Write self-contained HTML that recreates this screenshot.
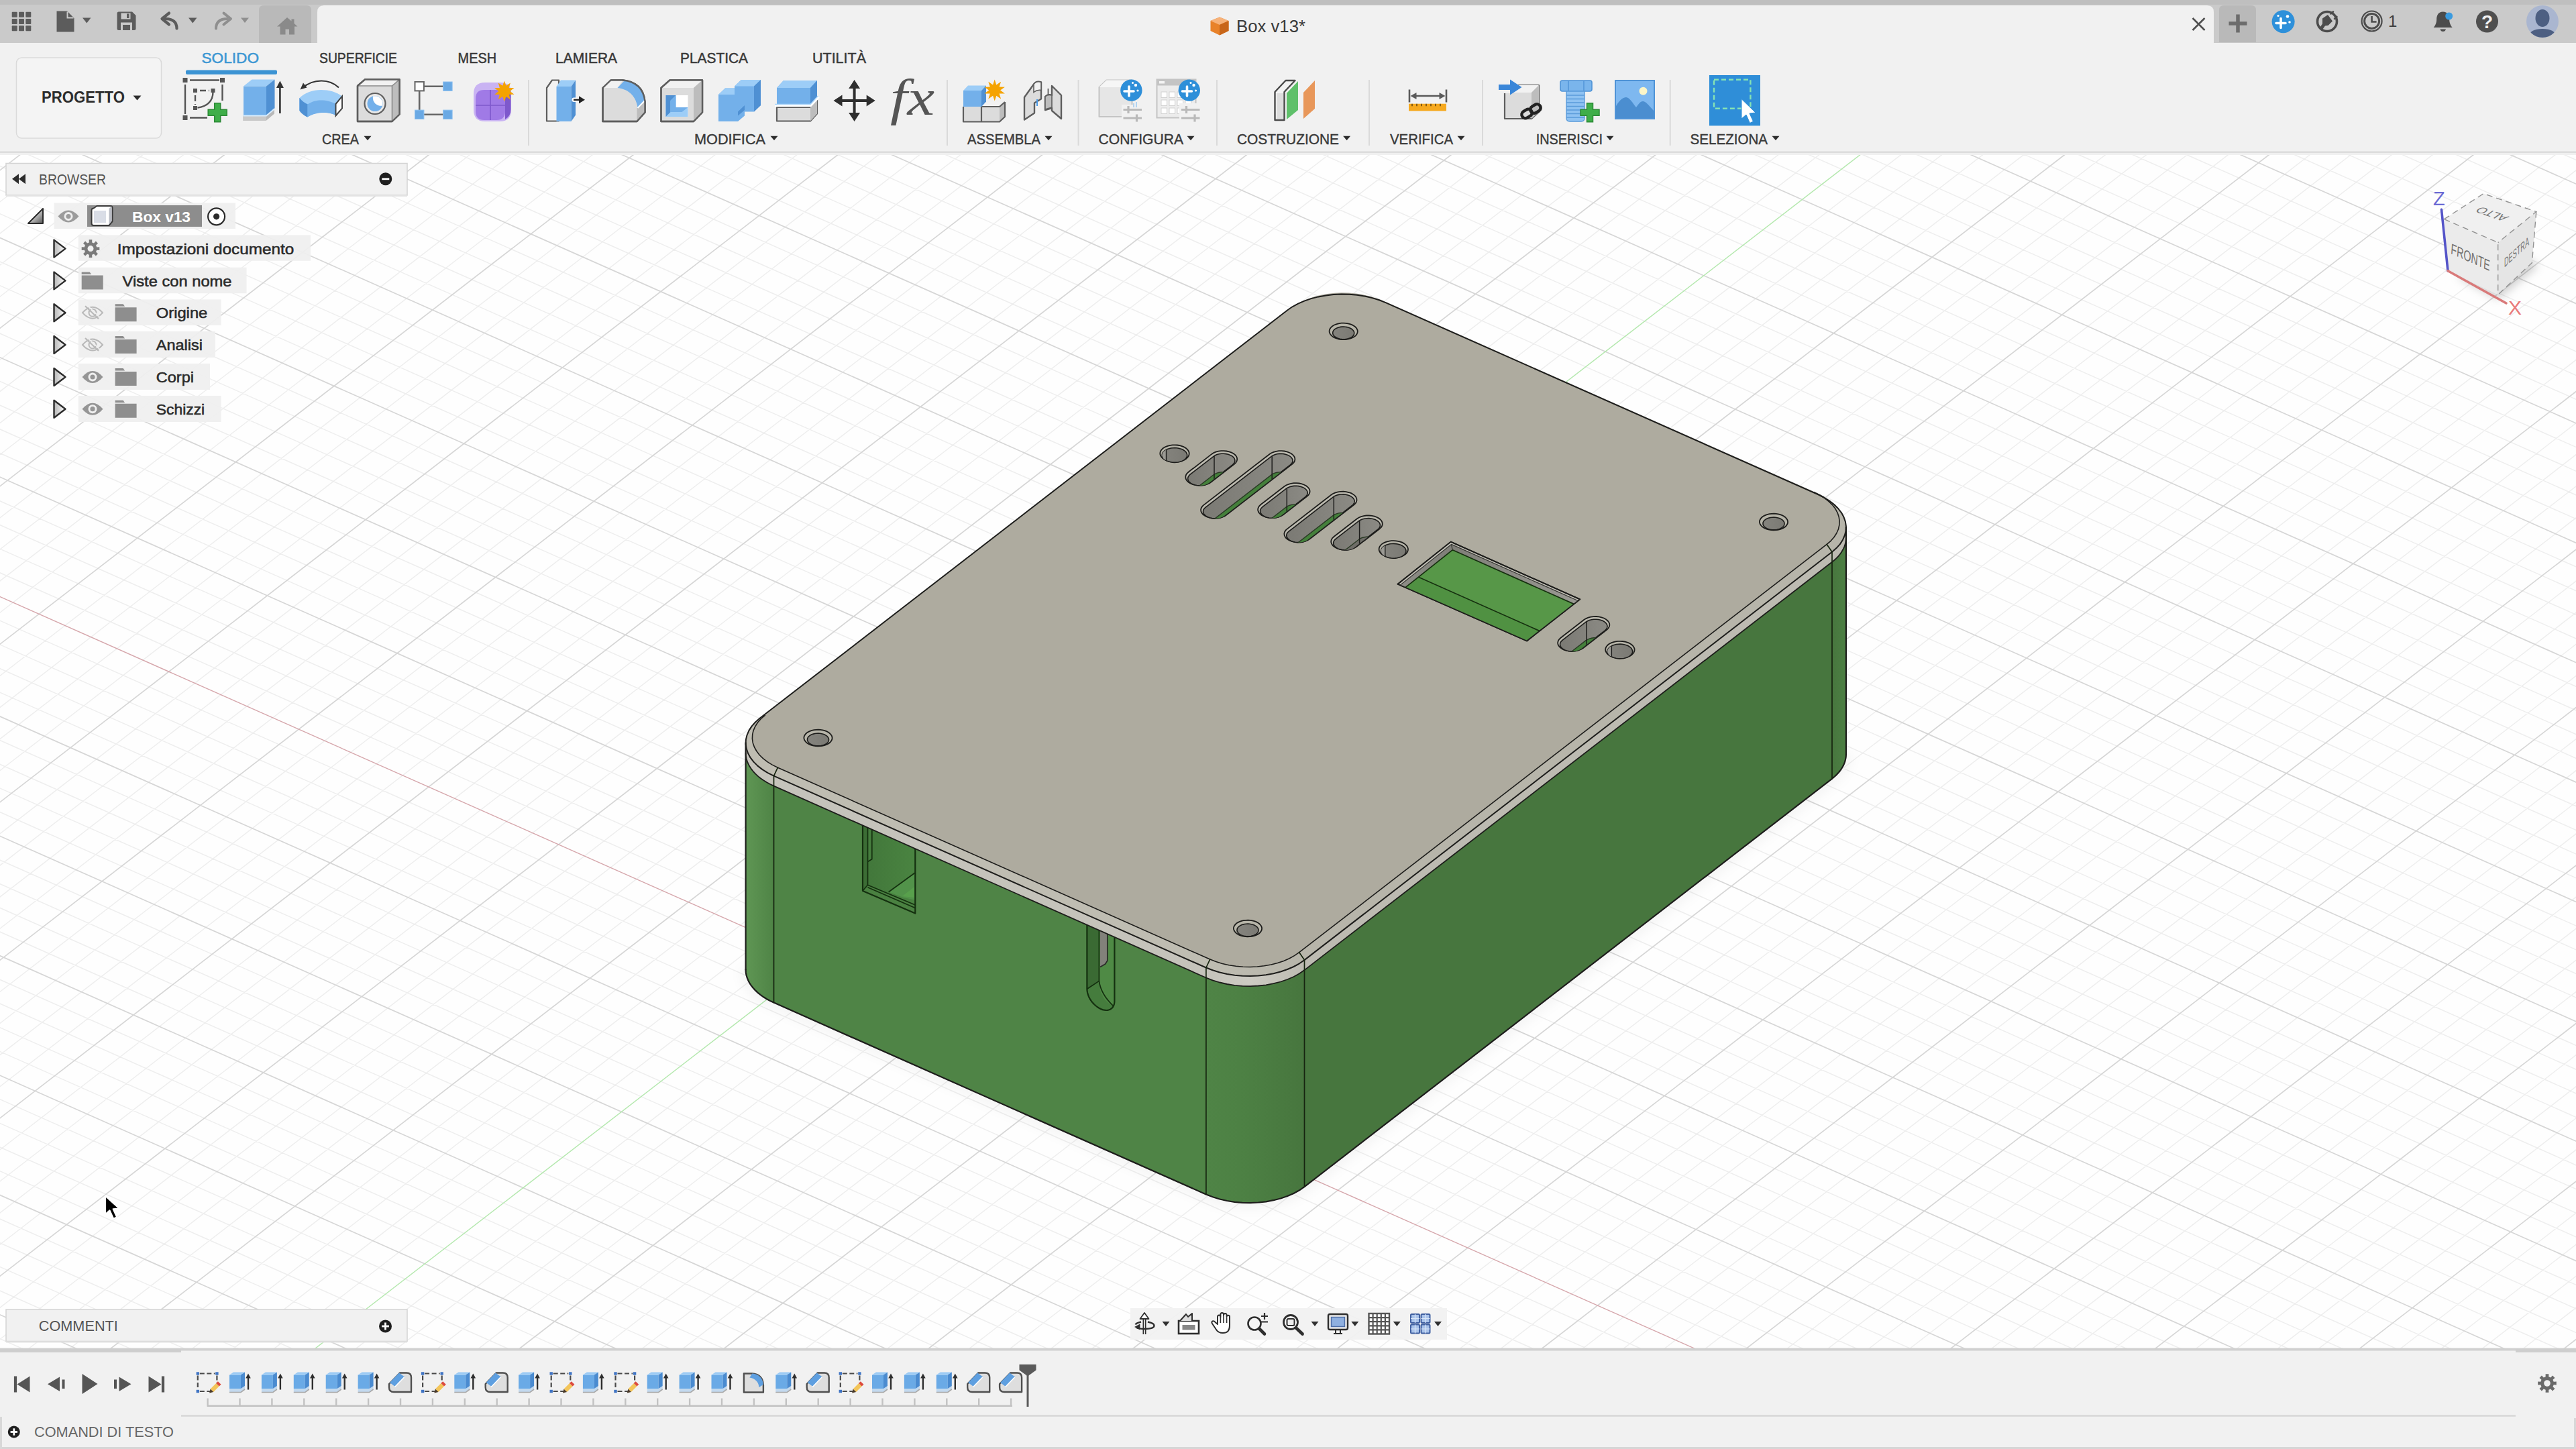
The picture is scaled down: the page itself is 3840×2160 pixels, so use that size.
<!DOCTYPE html>
<html><head><meta charset="utf-8"><title>Box v13</title>
<style>html,body{margin:0;padding:0;background:#fff;}body{width:3840px;height:2160px;overflow:hidden;font-family:"Liberation Sans", sans-serif;}svg{display:block;}text{font-family:"Liberation Sans", sans-serif;}</style>
</head><body>
<svg width="3840" height="2160" viewBox="0 0 3840 2160">
<rect width="3840" height="2160" fill="#fefefe"/>
<g id="grid">
<path d="M-20.0 2022.3L3860.0 3743.5M-20.0 1986.7L3860.0 3707.8M-20.0 1915.3L3860.0 3636.5M-20.0 1879.6L3860.0 3600.8M-20.0 1844.0L3860.0 3565.1M-20.0 1808.3L3860.0 3529.5M-20.0 1736.9L3860.0 3458.1M-20.0 1701.3L3860.0 3422.4M-20.0 1665.6L3860.0 3386.8M-20.0 1629.9L3860.0 3351.1M-20.0 1558.6L3860.0 3279.7M-20.0 1522.9L3860.0 3244.1M-20.0 1487.2L3860.0 3208.4M-20.0 1451.5L3860.0 3172.7M-20.0 1380.2L3860.0 3101.4M-20.0 1344.5L3860.0 3065.7M-20.0 1308.8L3860.0 3030.0M-20.0 1273.2L3860.0 2994.3M-20.0 1201.8L3860.0 2923.0M-20.0 1166.1L3860.0 2887.3M-20.0 1130.5L3860.0 2851.6M-20.0 1094.8L3860.0 2815.9M-20.0 1023.4L3860.0 2744.6M-20.0 987.8L3860.0 2708.9M-20.0 952.1L3860.0 2673.2M-20.0 916.4L3860.0 2637.6M-20.0 845.0L3860.0 2566.2M-20.0 809.4L3860.0 2530.5M-20.0 773.7L3860.0 2494.9M-20.0 738.0L3860.0 2459.2M-20.0 666.7L3860.0 2387.8M-20.0 631.0L3860.0 2352.2M-20.0 595.3L3860.0 2316.5M-20.0 559.6L3860.0 2280.8M-20.0 488.3L3860.0 2209.5M-20.0 452.6L3860.0 2173.8M-20.0 416.9L3860.0 2138.1M-20.0 381.3L3860.0 2102.4M-20.0 309.9L3860.0 2031.1M-20.0 274.2L3860.0 1995.4M-20.0 238.6L3860.0 1959.7M-20.0 202.9L3860.0 1924.1M-20.0 131.5L3860.0 1852.7M-20.0 95.9L3860.0 1817.0M-20.0 60.2L3860.0 1781.4M-20.0 24.5L3860.0 1745.7M-20.0 -46.8L3860.0 1674.3M-20.0 -82.5L3860.0 1638.7M-20.0 -118.2L3860.0 1603.0M-20.0 -153.9L3860.0 1567.3M-20.0 -225.2L3860.0 1495.9M-20.0 -260.9L3860.0 1460.3M-20.0 -296.6L3860.0 1424.6M-20.0 -332.3L3860.0 1388.9M-20.0 -403.6L3860.0 1317.6M-20.0 -439.3L3860.0 1281.9M-20.0 -475.0L3860.0 1246.2M-20.0 -510.6L3860.0 1210.5M-20.0 -582.0L3860.0 1139.2M-20.0 -617.7L3860.0 1103.5M-20.0 -653.3L3860.0 1067.8M-20.0 -689.0L3860.0 1032.2M-20.0 -760.4L3860.0 960.8M-20.0 -796.0L3860.0 925.1M-20.0 -831.7L3860.0 889.5M-20.0 -867.4L3860.0 853.8M-20.0 -938.7L3860.0 782.4M-20.0 -974.4L3860.0 746.8M-20.0 -1010.1L3860.0 711.1M-20.0 -1045.8L3860.0 675.4M-20.0 -1117.1L3860.0 604.1M-20.0 -1152.8L3860.0 568.4M-20.0 -1188.5L3860.0 532.7M-20.0 -1224.1L3860.0 497.0M-20.0 -1295.5L3860.0 425.7M-20.0 -1331.2L3860.0 390.0M-20.0 -1366.8L3860.0 354.3M-20.0 -1402.5L3860.0 318.7M-20.0 -1473.9L3860.0 247.3M-20.0 -1509.5L3860.0 211.6M8.6 200.0L-2372.7 2040.0M130.5 200.0L-2250.8 2040.0M191.5 200.0L-2189.9 2040.0M252.4 200.0L-2128.9 2040.0M313.4 200.0L-2068.0 2040.0M435.3 200.0L-1946.0 2040.0M496.3 200.0L-1885.1 2040.0M557.2 200.0L-1824.1 2040.0M618.2 200.0L-1763.2 2040.0M740.1 200.0L-1641.3 2040.0M801.0 200.0L-1580.3 2040.0M862.0 200.0L-1519.4 2040.0M923.0 200.0L-1458.4 2040.0M1044.9 200.0L-1336.5 2040.0M1105.8 200.0L-1275.5 2040.0M1166.8 200.0L-1214.6 2040.0M1227.7 200.0L-1153.6 2040.0M1349.6 200.0L-1031.7 2040.0M1410.6 200.0L-970.7 2040.0M1471.6 200.0L-909.8 2040.0M1532.5 200.0L-848.8 2040.0M1654.4 200.0L-726.9 2040.0M1715.4 200.0L-666.0 2040.0M1776.3 200.0L-605.0 2040.0M1837.3 200.0L-544.1 2040.0M1959.2 200.0L-422.1 2040.0M2020.2 200.0L-361.2 2040.0M2081.1 200.0L-300.2 2040.0M2142.1 200.0L-239.3 2040.0M2264.0 200.0L-117.4 2040.0M2324.9 200.0L-56.4 2040.0M2385.9 200.0L4.5 2040.0M2446.8 200.0L65.5 2040.0M2568.8 200.0L187.4 2040.0M2629.7 200.0L248.4 2040.0M2690.7 200.0L309.3 2040.0M2751.6 200.0L370.3 2040.0M2873.5 200.0L492.2 2040.0M2934.5 200.0L553.1 2040.0M2995.5 200.0L614.1 2040.0M3056.4 200.0L675.1 2040.0M3178.3 200.0L797.0 2040.0M3239.3 200.0L857.9 2040.0M3300.2 200.0L918.9 2040.0M3361.2 200.0L979.8 2040.0M3483.1 200.0L1101.8 2040.0M3544.1 200.0L1162.7 2040.0M3605.0 200.0L1223.7 2040.0M3666.0 200.0L1284.6 2040.0M3787.9 200.0L1406.5 2040.0M3848.8 200.0L1467.5 2040.0M3909.8 200.0L1528.4 2040.0M3970.7 200.0L1589.4 2040.0M4092.7 200.0L1711.3 2040.0M4153.6 200.0L1772.3 2040.0M4214.6 200.0L1833.2 2040.0M4275.5 200.0L1894.2 2040.0M4397.4 200.0L2016.1 2040.0M4458.4 200.0L2077.0 2040.0M4519.4 200.0L2138.0 2040.0M4580.3 200.0L2199.0 2040.0M4702.2 200.0L2320.9 2040.0M4763.2 200.0L2381.8 2040.0M4824.1 200.0L2442.8 2040.0M4885.1 200.0L2503.7 2040.0M5007.0 200.0L2625.7 2040.0M5068.0 200.0L2686.6 2040.0M5128.9 200.0L2747.6 2040.0M5189.9 200.0L2808.5 2040.0M5311.8 200.0L2930.4 2040.0M5372.7 200.0L2991.4 2040.0M5433.7 200.0L3052.3 2040.0M5494.6 200.0L3113.3 2040.0M5616.6 200.0L3235.2 2040.0M5677.5 200.0L3296.2 2040.0M5738.5 200.0L3357.1 2040.0M5799.4 200.0L3418.1 2040.0M5921.3 200.0L3540.0 2040.0M5982.3 200.0L3600.9 2040.0M6043.3 200.0L3661.9 2040.0M6104.2 200.0L3722.9 2040.0M6226.1 200.0L3844.8 2040.0" stroke="#eeeeee" stroke-width="1.5" fill="none"/>
<path d="M-20.0 1951.0L3860.0 3672.2M-20.0 1772.6L3860.0 3493.8M-20.0 1594.2L3860.0 3315.4M-20.0 1415.9L3860.0 3137.0M-20.0 1237.5L3860.0 2958.7M-20.0 1059.1L3860.0 2780.3M-20.0 702.3L3860.0 2423.5M-20.0 524.0L3860.0 2245.1M-20.0 345.6L3860.0 2066.8M-20.0 167.2L3860.0 1888.4M-20.0 -11.2L3860.0 1710.0M-20.0 -189.5L3860.0 1531.6M-20.0 -367.9L3860.0 1353.2M-20.0 -546.3L3860.0 1174.9M-20.0 -724.7L3860.0 996.5M-20.0 -903.1L3860.0 818.1M-20.0 -1081.4L3860.0 639.7M-20.0 -1259.8L3860.0 461.4M-20.0 -1438.2L3860.0 283.0M69.6 200.0L-2311.8 2040.0M374.3 200.0L-2007.0 2040.0M679.1 200.0L-1702.2 2040.0M983.9 200.0L-1397.4 2040.0M1288.7 200.0L-1092.7 2040.0M1593.5 200.0L-787.9 2040.0M1898.2 200.0L-483.1 2040.0M2203.0 200.0L-178.3 2040.0M2507.8 200.0L126.5 2040.0M3117.4 200.0L736.0 2040.0M3422.1 200.0L1040.8 2040.0M3726.9 200.0L1345.6 2040.0M4031.7 200.0L1650.4 2040.0M4336.5 200.0L1955.1 2040.0M4641.3 200.0L2259.9 2040.0M4946.0 200.0L2564.7 2040.0M5250.8 200.0L2869.5 2040.0M5555.6 200.0L3174.3 2040.0M5860.4 200.0L3479.0 2040.0M6165.2 200.0L3783.8 2040.0" stroke="#d6d6d6" stroke-width="1.7" fill="none"/>
<path d="M-20 880.7L3860 2601.9" stroke="#d6a7ac" stroke-width="1.4" fill="none"/>
<path d="M2812.6 200L431.2 2040" stroke="#b4e8ae" stroke-width="1.5" fill="none"/>
</g>
<g id="model">
<defs>
<linearGradient id="gLc" gradientUnits="userSpaceOnUse" x1="1111.6" y1="0" x2="1153.5" y2="0"><stop offset="0" stop-color="#5f9654"/><stop offset="1" stop-color="#4f8446"/></linearGradient>
<linearGradient id="gFc" gradientUnits="userSpaceOnUse" x1="1797.9" y1="0" x2="1944.5" y2="0"><stop offset="0" stop-color="#4f8446"/><stop offset="0.35" stop-color="#4d8144"/><stop offset="1" stop-color="#47763e"/></linearGradient>
<linearGradient id="gRc" gradientUnits="userSpaceOnUse" x1="2731.0" y1="0" x2="2751.9" y2="0"><stop offset="0" stop-color="#47763e"/><stop offset="1" stop-color="#4d8044"/></linearGradient>
<linearGradient id="sFc" gradientUnits="userSpaceOnUse" x1="1797.9" y1="0" x2="1944.5" y2="0"><stop offset="0" stop-color="#c5c3bb"/><stop offset="0.45" stop-color="#cdcbc3"/><stop offset="1" stop-color="#bdbbb2"/></linearGradient>
<linearGradient id="fFc" gradientUnits="userSpaceOnUse" x1="1797.9" y1="0" x2="1944.5" y2="0"><stop offset="0" stop-color="#bfbdb2"/><stop offset="1" stop-color="#b7b5aa"/></linearGradient>
<linearGradient id="gHole" x1="0" y1="0" x2="1" y2="0"><stop offset="0" stop-color="#86858f"/><stop offset="0" stop-color="#85847e"/><stop offset="1" stop-color="#7b7a74"/></linearGradient>
<linearGradient id="gSlot" x1="0" y1="0" x2="1" y2="0"><stop offset="0" stop-color="#7b7a74"/><stop offset="1" stop-color="#8b8a84"/></linearGradient>
<filter id="shadow" x="-20%" y="-20%" width="140%" height="140%"><feGaussianBlur stdDeviation="9"/></filter>
</defs>
<path d="M1111.6 1445.4L1111.8 1449.4L1112.5 1453.5L1113.7 1457.5L1115.3 1461.4L1117.3 1465.3L1119.8 1469.1L1122.7 1472.8L1126.0 1476.4L1129.7 1479.9L1133.8 1483.2L1138.2 1486.3L1143.0 1489.3L1148.1 1492.0L1153.5 1494.6L1797.9 1780.5L1807.7 1784.3L1818.1 1787.5L1829.1 1790.0L1840.5 1791.8L1852.1 1792.8L1863.9 1793.1L1875.6 1792.5L1887.1 1791.3L1898.3 1789.2L1909.0 1786.5L1919.1 1783.0L1928.5 1779.0L1937.0 1774.3L1944.5 1769.1L2731.0 1160.8L2733.8 1158.5L2736.4 1156.2L2738.8 1153.8L2741.1 1151.3L2743.1 1148.8L2744.9 1146.2L2746.5 1143.5L2748.0 1140.9L2749.2 1138.1L2750.2 1135.4L2750.9 1132.6L2751.5 1129.8L2751.8 1127.0L2751.9 1124.2" fill="none" stroke="#000" stroke-opacity="0.06" stroke-width="12" filter="url(#shadow)"/>
<path d="M1111.6 1120.4L1111.8 1124.4L1112.5 1128.5L1113.7 1132.5L1115.3 1136.4L1117.3 1140.3L1119.8 1144.1L1122.7 1147.8L1126.0 1151.4L1129.7 1154.9L1133.8 1158.2L1138.2 1161.3L1143.0 1164.3L1148.1 1167.0L1153.5 1169.6L1797.9 1455.5L1807.7 1459.3L1818.1 1462.5L1829.1 1465.0L1840.5 1466.8L1852.1 1467.8L1863.9 1468.1L1875.6 1467.5L1887.1 1466.3L1898.3 1464.2L1909.0 1461.5L1919.1 1458.0L1928.5 1454.0L1937.0 1449.3L1944.5 1444.1L2731.0 835.8L2733.8 833.5L2736.4 831.2L2738.8 828.8L2741.1 826.3L2743.1 823.8L2744.9 821.2L2746.5 818.5L2748.0 815.9L2749.2 813.1L2750.2 810.4L2750.9 807.6L2751.5 804.8L2751.8 802.0L2751.9 799.2L2751.9 1124.2L2751.8 1127.0L2751.5 1129.8L2750.9 1132.6L2750.2 1135.4L2749.2 1138.1L2748.0 1140.9L2746.5 1143.5L2744.9 1146.2L2743.1 1148.8L2741.1 1151.3L2738.8 1153.8L2736.4 1156.2L2733.8 1158.5L2731.0 1160.8L1944.5 1769.1L1937.0 1774.3L1928.5 1779.0L1919.1 1783.0L1909.0 1786.5L1898.3 1789.2L1887.1 1791.3L1875.6 1792.5L1863.9 1793.1L1852.1 1792.8L1840.5 1791.8L1829.1 1790.0L1818.1 1787.5L1807.7 1784.3L1797.9 1780.5L1153.5 1494.6L1148.1 1492.0L1143.0 1489.3L1138.2 1486.3L1133.8 1483.2L1129.7 1479.9L1126.0 1476.4L1122.7 1472.8L1119.8 1469.1L1117.3 1465.3L1115.3 1461.4L1113.7 1457.5L1112.5 1453.5L1111.8 1449.4L1111.6 1445.4Z" fill="#4f8446" stroke="#4f8446" stroke-width="1"/>
<path d="M1111.6 1120.4L1111.8 1124.4L1112.5 1128.5L1113.7 1132.5L1115.3 1136.4L1117.3 1140.3L1119.8 1144.1L1122.7 1147.8L1126.0 1151.4L1129.7 1154.9L1133.8 1158.2L1138.2 1161.3L1143.0 1164.3L1148.1 1167.0L1153.5 1169.6L1153.5 1494.6L1148.1 1492.0L1143.0 1489.3L1138.2 1486.3L1133.8 1483.2L1129.7 1479.9L1126.0 1476.4L1122.7 1472.8L1119.8 1469.1L1117.3 1465.3L1115.3 1461.4L1113.7 1457.5L1112.5 1453.5L1111.8 1449.4L1111.6 1445.4Z" fill="url(#gLc)"/>
<path d="M1153.5 1169.6L1797.9 1455.5L1797.9 1780.5L1153.5 1494.6Z" fill="#4f8446"/>
<path d="M1797.9 1455.5L1807.7 1459.3L1818.1 1462.5L1829.1 1465.0L1840.5 1466.8L1852.1 1467.8L1863.9 1468.1L1875.6 1467.5L1887.1 1466.3L1898.3 1464.2L1909.0 1461.5L1919.1 1458.0L1928.5 1454.0L1937.0 1449.3L1944.5 1444.1L1944.5 1769.1L1937.0 1774.3L1928.5 1779.0L1919.1 1783.0L1909.0 1786.5L1898.3 1789.2L1887.1 1791.3L1875.6 1792.5L1863.9 1793.1L1852.1 1792.8L1840.5 1791.8L1829.1 1790.0L1818.1 1787.5L1807.7 1784.3L1797.9 1780.5Z" fill="url(#gFc)"/>
<path d="M1944.5 1444.1L2731.0 835.8L2731.0 1160.8L1944.5 1769.1Z" fill="#47763e"/>
<path d="M2731.0 835.8L2733.8 833.5L2736.4 831.2L2738.8 828.8L2741.1 826.3L2743.1 823.8L2744.9 821.2L2746.5 818.5L2748.0 815.9L2749.2 813.1L2750.2 810.4L2750.9 807.6L2751.5 804.8L2751.8 802.0L2751.9 799.2L2751.9 1124.2L2751.8 1127.0L2751.5 1129.8L2750.9 1132.6L2750.2 1135.4L2749.2 1138.1L2748.0 1140.9L2746.5 1143.5L2744.9 1146.2L2743.1 1148.8L2741.1 1151.3L2738.8 1153.8L2736.4 1156.2L2733.8 1158.5L2731.0 1160.8Z" fill="url(#gRc)"/>
<linearGradient id="gCut" gradientUnits="userSpaceOnUse" x1="1286.0" y1="0" x2="1364.3" y2="0"><stop offset="0" stop-color="#41763a"/><stop offset="1" stop-color="#4a8441"/></linearGradient>
<path d="M1286.0 1228.4L1364.3 1263.1L1364.3 1361.5L1286.0 1328.0Z" fill="url(#gCut)"/>
<path d="M1286.0 1228.4L1293.5 1231.7L1293.5 1319.3L1286.0 1328.0Z" fill="#3c6d35"/>
<path d="M1286.0 1328.0L1293.5 1319.3L1364.3 1349.0L1364.3 1361.5Z" fill="#4a8141"/>
<path d="M1324.600 1329.800L1363.700 1301.200L1363.700 1341.600L1347 1337.900Z" fill="#52934a"/>
<path d="M1345 1336l18-14v16z" fill="#5ba54d" fill-opacity="0.7"/>
<path d="M1293.5 1231.7L1299.800 1234.5L1299.800 1280.700L1293.5 1284.500Z" fill="#467d3e"/>
<g fill="none" stroke="#14300f" stroke-width="1.700" stroke-linejoin="round">
<path d="M1286.0 1228.4L1286.0 1328.0L1364.3 1361.5L1364.3 1263.1" stroke-width="2.200"/>
<path d="M1293.5 1233.7L1293.5 1319.3L1364.3 1349.0"/>
<path d="M1293.5 1322.8L1364.3 1353.5"/>
<path d="M1286.0 1328.0L1293.5 1319.3"/>
<path d="M1299.800 1236.5V1280.700L1293.5 1284.500"/>
<path d="M1324.600 1329.800L1363.700 1301.200"/>
</g>
<path d="M1620.4 1376.7L1620.4 1474.3L1620.6 1477.1L1621.1 1480.0L1622.0 1482.9L1623.1 1485.9L1624.6 1488.8L1626.4 1491.6L1628.4 1494.3L1630.7 1496.8L1633.1 1499.0L1635.6 1501.0L1638.2 1502.7L1640.9 1504.1L1643.6 1505.1L1646.2 1505.7L1648.7 1506.0L1651.2 1505.9L1653.4 1505.3L1655.4 1504.4L1657.2 1503.2L1658.7 1501.6L1659.8 1499.7L1660.7 1497.5L1661.2 1495.1L1661.4 1492.5L1661.4 1394.9Z" fill="#4f8a45"/>
<path d="M1620.4 1376.7L1620.4 1474.3L1638.4 1462.400L1638.4 1384.7Z" fill="#3a6a33"/>
<path d="M1620.4 1474.3L1620.6 1477.1L1621.1 1480.0L1622.0 1482.9L1623.1 1485.9L1624.6 1488.8L1626.4 1491.6L1628.4 1494.3L1630.7 1496.8L1633.1 1499.0L1635.6 1501.0L1638.2 1502.7L1640.9 1504.1L1643.6 1505.1L1646.2 1505.7L1648.7 1506.0L1651.2 1505.9L1653.4 1505.3L1655.4 1504.4L1657.2 1503.2L1658.7 1501.6L1659.5 1499.5L1653.0 1496.0L1646.0 1489.0L1640.5 1478.0L1638.4 1462.4Z" fill="#457c3d"/>
<path d="M1640 1385.4L1650.800 1390.2L1650.800 1432L1647.700 1437L1640 1441.500Z" fill="#82817b"/>
<g fill="none" stroke="#14300f" stroke-width="1.700" stroke-linejoin="round">
<path d="M1620.4 1376.7L1620.4 1474.3L1620.6 1477.1L1621.1 1480.0L1622.0 1482.9L1623.1 1485.9L1624.6 1488.8L1626.4 1491.6L1628.4 1494.3L1630.7 1496.8L1633.1 1499.0L1635.6 1501.0L1638.2 1502.7L1640.9 1504.1L1643.6 1505.1L1646.2 1505.7L1648.7 1506.0L1651.2 1505.9L1653.4 1505.3L1655.4 1504.4L1657.2 1503.2L1658.7 1501.6L1659.8 1499.7L1660.7 1497.5L1661.2 1495.1L1661.4 1492.5L1661.4 1394.9" stroke-width="2.200"/>
<path d="M1620.4 1474.3L1638.4 1462.400"/>
<path d="M1638.4 1386.7V1441.500"/>
<path d="M1638.4 1441.500V1462.400Q1641 1482 1659.500 1499.500"/>
<path d="M1650.800 1392.2V1432L1647.700 1437L1640 1441.500" stroke="#2a2a28"/>
</g>
<path d="M1111.6 1107.4L1111.8 1111.4L1112.5 1115.5L1113.7 1119.5L1115.3 1123.4L1117.3 1127.3L1119.8 1131.1L1122.7 1134.8L1126.0 1138.4L1129.7 1141.9L1133.8 1145.2L1138.2 1148.3L1143.0 1151.3L1148.1 1154.0L1153.5 1156.6L1797.9 1442.5L1797.9 1457.5L1153.5 1171.6L1148.1 1169.0L1143.0 1166.3L1138.2 1163.3L1133.8 1160.2L1129.7 1156.9L1126.0 1153.4L1122.7 1149.8L1119.8 1146.1L1117.3 1142.3L1115.3 1138.4L1113.7 1134.5L1112.5 1130.5L1111.8 1126.4L1111.6 1122.4Z" fill="#c5c3bb"/>
<path d="M1797.9 1442.5L1807.7 1446.3L1818.1 1449.5L1829.1 1452.0L1840.5 1453.8L1852.1 1454.8L1863.9 1455.1L1875.6 1454.5L1887.1 1453.3L1898.3 1451.2L1909.0 1448.5L1919.1 1445.0L1928.5 1441.0L1937.0 1436.3L1944.5 1431.1L1944.5 1446.1L1937.0 1451.3L1928.5 1456.0L1919.1 1460.0L1909.0 1463.5L1898.3 1466.2L1887.1 1468.3L1875.6 1469.5L1863.9 1470.1L1852.1 1469.8L1840.5 1468.8L1829.1 1467.0L1818.1 1464.5L1807.7 1461.3L1797.9 1457.5Z" fill="url(#sFc)"/>
<path d="M1944.5 1431.1L2731.0 822.8L2733.8 820.5L2736.4 818.2L2738.8 815.8L2741.1 813.3L2743.1 810.8L2744.9 808.2L2746.5 805.5L2748.0 802.9L2749.2 800.1L2750.2 797.4L2750.9 794.6L2751.5 791.8L2751.8 789.0L2751.9 786.2L2751.9 801.2L2751.8 804.0L2751.5 806.8L2750.9 809.6L2750.2 812.4L2749.2 815.1L2748.0 817.9L2746.5 820.5L2744.9 823.2L2743.1 825.8L2741.1 828.3L2738.8 830.8L2736.4 833.2L2733.8 835.5L2731.0 837.8L1944.5 1446.1Z" fill="#bdbbb2"/>
<path d="M1132.5 1070.8L1126.0 1076.5L1120.6 1082.6L1116.5 1088.9L1113.6 1095.6L1111.9 1102.4L1111.6 1109.2L1112.7 1116.1L1115.0 1122.8L1118.6 1129.4L1123.4 1135.6L1129.4 1141.6L1136.5 1147.1L1144.5 1152.1L1153.5 1156.6L1797.9 1442.5L1807.7 1446.3L1818.1 1449.5L1829.1 1452.0L1840.5 1453.8L1852.1 1454.8L1863.9 1455.1L1875.6 1454.5L1887.1 1453.3L1898.3 1451.2L1909.0 1448.5L1919.1 1445.0L1928.5 1441.0L1937.0 1436.3L1944.5 1431.1L2731.0 822.8L2737.5 817.1L2742.9 811.1L2747.0 804.7L2749.9 798.0L2751.6 791.3L2751.9 784.4L2750.9 777.6L2748.5 770.8L2745.0 764.3L2740.1 758.0L2734.1 752.0L2727.1 746.5L2719.0 741.5L2710.0 737.0L2065.6 451.1L2055.9 447.3L2045.4 444.1L2034.4 441.6L2023.0 439.8L2011.4 438.8L1999.7 438.5L1988.0 439.1L1976.4 440.4L1965.3 442.4L1954.5 445.1L1944.4 448.6L1935.1 452.7L1926.5 457.3L1919.0 462.5Z" fill="#bfbdb2"/>
<path d="M1944.5 1431.1L2731.0 822.8L2737.5 817.1L2742.9 811.1L2747.0 804.7L2749.9 798.0L2751.6 791.3L2751.9 784.4L2750.9 777.6L2748.5 770.8L2745.0 764.3L2740.1 758.0L2734.1 752.0L2727.1 746.5L2719.0 741.5L2710.0 737.0L2704.1 733.6L2712.3 737.7L2719.6 742.3L2726.0 747.3L2731.5 752.6L2735.9 758.3L2739.1 764.3L2741.2 770.4L2742.1 776.6L2741.8 782.8L2740.4 789.0L2737.7 795.0L2734.0 800.8L2729.1 806.3L2723.2 811.4L1936.7 1419.7Z" fill="#b7b5aa"/>
<path d="M1797.9 1442.5L1807.7 1446.3L1818.1 1449.5L1829.1 1452.0L1840.5 1453.8L1852.1 1454.8L1863.9 1455.1L1875.6 1454.5L1887.1 1453.3L1898.3 1451.2L1909.0 1448.5L1919.1 1445.0L1928.5 1441.0L1937.0 1436.3L1944.5 1431.1L1936.7 1419.7L1929.9 1424.4L1922.1 1428.7L1913.6 1432.4L1904.5 1435.5L1894.8 1438.0L1884.6 1439.8L1874.2 1441.0L1863.6 1441.5L1852.9 1441.3L1842.4 1440.3L1832.0 1438.7L1822.1 1436.5L1812.6 1433.6L1803.7 1430.1Z" fill="url(#fFc)"/>
<path d="M1140.3 1066.4L1134.4 1071.5L1129.5 1077.0L1125.8 1082.8L1123.1 1088.8L1121.7 1095.0L1121.4 1101.2L1122.3 1107.4L1124.4 1113.5L1127.7 1119.5L1132.0 1125.2L1137.5 1130.6L1143.9 1135.6L1151.2 1140.1L1159.4 1144.2L1803.7 1430.1L1812.6 1433.6L1822.1 1436.5L1832.0 1438.7L1842.4 1440.3L1852.9 1441.3L1863.6 1441.5L1874.2 1441.0L1884.6 1439.8L1894.8 1438.0L1904.5 1435.5L1913.6 1432.4L1922.1 1428.7L1929.9 1424.4L1936.7 1419.7L2723.2 811.4L2729.1 806.3L2734.0 800.8L2737.7 795.0L2740.4 789.0L2741.8 782.8L2742.1 776.6L2741.2 770.4L2739.1 764.3L2735.9 758.3L2731.5 752.6L2726.0 747.3L2719.6 742.3L2712.3 737.7L2704.1 733.6L2059.8 447.8L2050.9 444.3L2041.4 441.4L2031.5 439.1L2021.2 437.5L2010.6 436.6L2000.0 436.3L1989.3 436.8L1978.9 438.0L1968.7 439.8L1959.0 442.3L1949.9 445.4L1941.4 449.1L1933.6 453.4L1926.8 458.1Z" fill="#aeab9f"/>
<path d="M2019.6 501.4L2021.3 499.8L2022.6 498.0L2023.5 496.1L2023.8 494.2L2023.6 492.3L2022.8 490.4L2021.6 488.6L2019.9 486.9L2017.8 485.4L2015.3 484.1L2012.5 483.1L2009.5 482.3L2006.3 481.8L2003.0 481.6L1999.7 481.7L1996.5 482.1L1993.4 482.8L1990.6 483.8L1988.0 485.0L1985.8 486.4L1984.1 488.0L1982.8 489.8L1981.9 491.7L1981.6 493.6L1981.8 495.5L1982.6 497.4L1983.8 499.2L1985.5 500.9L1987.6 502.4L1990.1 503.7L1992.9 504.7L1995.9 505.5L1999.1 506.0L2002.4 506.2L2005.7 506.1L2008.9 505.7L2012.0 505.0L2014.8 504.0L2017.4 502.8Z" fill="#b7b5a9" stroke="#1d1d1b" stroke-width="1.8"/>
<path d="M2015.5 502.1L2016.9 500.9L2017.9 499.5L2018.5 498.1L2018.7 496.6L2018.6 495.2L2018.0 493.7L2017.1 492.4L2015.8 491.1L2014.2 490.0L2012.3 489.0L2010.2 488.2L2007.9 487.6L2005.4 487.2L2002.9 487.0L2000.4 487.1L1998.0 487.4L1995.6 488.0L1993.5 488.7L1991.5 489.6L1989.9 490.7L1988.5 491.9L1987.5 493.3L1986.9 494.7L1986.7 496.2L1986.8 497.6L1987.4 499.1L1988.3 500.4L1989.6 501.7L1991.2 502.8L1993.1 503.8L1995.2 504.6L1997.5 505.2L2000.0 505.6L2002.5 505.8L2005.0 505.7L2007.4 505.4L2009.8 504.8L2011.9 504.1L2013.9 503.2Z" fill="url(#gHole)" stroke="#1d1d1b" stroke-width="1.6"/>
<path d="M2660.9 785.5L2662.6 783.9L2663.9 782.1L2664.8 780.2L2665.1 778.3L2664.9 776.4L2664.1 774.5L2662.9 772.7L2661.2 771.0L2659.1 769.5L2656.6 768.2L2653.8 767.2L2650.8 766.4L2647.6 765.9L2644.3 765.7L2641.0 765.8L2637.8 766.2L2634.7 766.9L2631.9 767.9L2629.3 769.1L2627.1 770.5L2625.4 772.1L2624.1 773.9L2623.2 775.8L2622.9 777.7L2623.1 779.6L2623.9 781.5L2625.1 783.3L2626.8 785.0L2628.9 786.5L2631.4 787.8L2634.2 788.8L2637.2 789.6L2640.4 790.1L2643.7 790.3L2647.0 790.2L2650.2 789.8L2653.3 789.1L2656.1 788.1L2658.7 786.9Z" fill="#b7b5a9" stroke="#1d1d1b" stroke-width="1.8"/>
<path d="M2656.8 786.2L2658.2 785.0L2659.2 783.6L2659.8 782.2L2660.0 780.7L2659.9 779.3L2659.3 777.8L2658.4 776.5L2657.1 775.2L2655.5 774.1L2653.6 773.1L2651.5 772.3L2649.2 771.7L2646.7 771.3L2644.2 771.1L2641.7 771.2L2639.3 771.5L2636.9 772.1L2634.8 772.8L2632.8 773.7L2631.2 774.8L2629.8 776.0L2628.8 777.4L2628.2 778.8L2628.0 780.3L2628.1 781.7L2628.7 783.2L2629.6 784.5L2630.9 785.8L2632.5 786.9L2634.4 787.9L2636.5 788.7L2638.8 789.3L2641.3 789.7L2643.8 789.9L2646.3 789.8L2648.7 789.5L2651.1 788.9L2653.2 788.2L2655.2 787.3Z" fill="url(#gHole)" stroke="#1d1d1b" stroke-width="1.6"/>
<path d="M1236.4 1107.5L1238.1 1105.9L1239.4 1104.1L1240.3 1102.2L1240.6 1100.3L1240.4 1098.4L1239.6 1096.5L1238.4 1094.7L1236.7 1093.0L1234.6 1091.5L1232.1 1090.2L1229.3 1089.2L1226.3 1088.4L1223.1 1087.9L1219.8 1087.7L1216.5 1087.8L1213.3 1088.2L1210.2 1088.9L1207.4 1089.9L1204.8 1091.1L1202.6 1092.5L1200.9 1094.1L1199.6 1095.9L1198.7 1097.8L1198.4 1099.7L1198.6 1101.6L1199.4 1103.5L1200.6 1105.3L1202.3 1107.0L1204.4 1108.5L1206.9 1109.8L1209.7 1110.8L1212.7 1111.6L1215.9 1112.1L1219.2 1112.3L1222.5 1112.2L1225.7 1111.8L1228.8 1111.1L1231.6 1110.1L1234.2 1108.9Z" fill="#b7b5a9" stroke="#1d1d1b" stroke-width="1.8"/>
<path d="M1232.3 1108.2L1233.7 1107.0L1234.7 1105.6L1235.3 1104.2L1235.5 1102.7L1235.4 1101.3L1234.8 1099.8L1233.9 1098.5L1232.6 1097.2L1231.0 1096.1L1229.1 1095.1L1227.0 1094.3L1224.7 1093.7L1222.2 1093.3L1219.7 1093.1L1217.2 1093.2L1214.8 1093.5L1212.4 1094.1L1210.3 1094.8L1208.3 1095.7L1206.7 1096.8L1205.3 1098.0L1204.3 1099.4L1203.7 1100.8L1203.5 1102.3L1203.6 1103.7L1204.2 1105.2L1205.1 1106.5L1206.4 1107.8L1208.0 1108.9L1209.9 1109.9L1212.0 1110.7L1214.3 1111.3L1216.8 1111.7L1219.3 1111.9L1221.8 1111.8L1224.2 1111.5L1226.6 1110.9L1228.7 1110.2L1230.7 1109.3Z" fill="url(#gHole)" stroke="#1d1d1b" stroke-width="1.6"/>
<path d="M1876.9 1391.5L1878.6 1389.9L1879.9 1388.1L1880.8 1386.2L1881.1 1384.3L1880.9 1382.4L1880.1 1380.5L1878.9 1378.7L1877.2 1377.0L1875.1 1375.5L1872.6 1374.2L1869.8 1373.2L1866.8 1372.4L1863.6 1371.9L1860.3 1371.7L1857.0 1371.8L1853.8 1372.2L1850.7 1372.9L1847.9 1373.9L1845.3 1375.1L1843.1 1376.5L1841.4 1378.1L1840.1 1379.9L1839.2 1381.8L1838.9 1383.7L1839.1 1385.6L1839.9 1387.5L1841.1 1389.3L1842.8 1391.0L1844.9 1392.5L1847.4 1393.8L1850.2 1394.8L1853.2 1395.6L1856.4 1396.1L1859.7 1396.3L1863.0 1396.2L1866.2 1395.8L1869.3 1395.1L1872.1 1394.1L1874.7 1392.9Z" fill="#b7b5a9" stroke="#1d1d1b" stroke-width="1.8"/>
<path d="M1872.8 1392.2L1874.2 1391.0L1875.2 1389.6L1875.8 1388.2L1876.0 1386.7L1875.9 1385.3L1875.3 1383.8L1874.4 1382.5L1873.1 1381.2L1871.5 1380.1L1869.6 1379.1L1867.5 1378.3L1865.2 1377.7L1862.7 1377.3L1860.2 1377.1L1857.7 1377.2L1855.3 1377.5L1852.9 1378.1L1850.8 1378.8L1848.8 1379.7L1847.2 1380.8L1845.8 1382.0L1844.8 1383.4L1844.2 1384.8L1844.0 1386.3L1844.1 1387.7L1844.7 1389.2L1845.6 1390.5L1846.9 1391.8L1848.5 1392.9L1850.4 1393.9L1852.5 1394.7L1854.8 1395.3L1857.3 1395.7L1859.8 1395.9L1862.3 1395.8L1864.7 1395.5L1867.1 1394.9L1869.2 1394.2L1871.2 1393.3Z" fill="url(#gHole)" stroke="#1d1d1b" stroke-width="1.6"/>
<path d="M1768.4 683.7L1770.2 682.0L1771.5 680.2L1772.4 678.3L1772.7 676.3L1772.5 674.3L1771.7 672.4L1770.5 670.5L1768.7 668.8L1766.6 667.3L1764.0 665.9L1761.1 664.9L1758.0 664.0L1754.7 663.5L1751.3 663.3L1747.9 663.4L1744.6 663.8L1741.4 664.6L1738.5 665.6L1735.9 666.8L1733.6 668.3L1731.8 670.0L1730.5 671.8L1729.6 673.7L1729.3 675.7L1729.5 677.7L1730.3 679.6L1731.5 681.5L1733.3 683.2L1735.4 684.7L1738.0 686.1L1740.9 687.1L1744.0 688.0L1747.3 688.5L1750.7 688.7L1754.1 688.6L1757.4 688.2L1760.6 687.4L1763.5 686.4L1766.1 685.2Z" fill="#b7b5a9" stroke="#1d1d1b" stroke-width="1.8"/>
<path d="M1765.9 685.1L1767.5 683.7L1768.7 682.1L1769.4 680.5L1769.7 678.8L1769.5 677.1L1768.8 675.4L1767.8 673.8L1766.3 672.3L1764.4 671.0L1762.2 669.8L1759.7 668.9L1757.0 668.2L1754.2 667.8L1751.3 667.6L1748.4 667.7L1745.5 668.0L1742.8 668.7L1740.3 669.5L1738.0 670.6L1736.1 671.9L1734.5 673.3L1733.3 674.9L1732.6 676.5L1732.3 678.2L1732.5 679.9L1733.2 681.6L1734.2 683.2L1735.7 684.7L1737.6 686.0L1739.8 687.2L1742.3 688.1L1745.0 688.8L1747.8 689.2L1750.7 689.4L1753.6 689.3L1756.5 689.0L1759.2 688.3L1761.7 687.5L1764.0 686.4Z" fill="url(#gHole)" stroke="#1d1d1b" stroke-width="1.6"/>
<clipPath id="ch4"><path d="M1765.9 685.1L1767.5 683.7L1768.7 682.1L1769.4 680.5L1769.7 678.8L1769.5 677.1L1768.8 675.4L1767.8 673.8L1766.3 672.3L1764.4 671.0L1762.2 669.8L1759.7 668.9L1757.0 668.2L1754.2 667.8L1751.3 667.6L1748.4 667.7L1745.5 668.0L1742.8 668.7L1740.3 669.5L1738.0 670.6L1736.1 671.9L1734.5 673.3L1733.3 674.9L1732.6 676.5L1732.3 678.2L1732.5 679.9L1733.2 681.6L1734.2 683.2L1735.7 684.7L1737.6 686.0L1739.8 687.2L1742.3 688.1L1745.0 688.8L1747.8 689.2L1750.7 689.4L1753.6 689.3L1756.5 689.0L1759.2 688.3L1761.7 687.5L1764.0 686.4Z"/></clipPath>
<g clip-path="url(#ch4)"><path d="M1738.5 662.0v30h-14v-30z" fill="#9b9a94"/><path d="M1738.5 662.0v30" stroke="#1d1d1b" stroke-width="1.4"/></g>
<path d="M2094.7 826.5L2096.5 824.8L2097.8 823.0L2098.7 821.1L2099.0 819.1L2098.8 817.1L2098.0 815.2L2096.8 813.3L2095.0 811.6L2092.9 810.1L2090.3 808.7L2087.4 807.7L2084.3 806.8L2081.0 806.3L2077.6 806.1L2074.2 806.2L2070.9 806.6L2067.7 807.4L2064.8 808.4L2062.2 809.6L2059.9 811.1L2058.1 812.8L2056.8 814.6L2055.9 816.5L2055.6 818.5L2055.8 820.5L2056.6 822.4L2057.8 824.3L2059.6 826.0L2061.7 827.5L2064.3 828.9L2067.2 829.9L2070.3 830.8L2073.6 831.3L2077.0 831.5L2080.4 831.4L2083.7 831.0L2086.9 830.2L2089.8 829.2L2092.4 828.0Z" fill="#b7b5a9" stroke="#1d1d1b" stroke-width="1.8"/>
<path d="M2092.2 827.9L2093.8 826.5L2095.0 824.9L2095.7 823.3L2096.0 821.6L2095.8 819.9L2095.1 818.2L2094.1 816.6L2092.6 815.1L2090.7 813.8L2088.5 812.6L2086.0 811.7L2083.3 811.0L2080.5 810.6L2077.6 810.4L2074.7 810.5L2071.8 810.8L2069.1 811.5L2066.6 812.3L2064.3 813.4L2062.4 814.7L2060.8 816.1L2059.6 817.7L2058.9 819.3L2058.6 821.0L2058.8 822.7L2059.5 824.4L2060.5 826.0L2062.0 827.5L2063.9 828.8L2066.1 830.0L2068.6 830.9L2071.3 831.6L2074.1 832.0L2077.0 832.2L2079.9 832.1L2082.8 831.8L2085.5 831.1L2088.0 830.3L2090.3 829.2Z" fill="url(#gHole)" stroke="#1d1d1b" stroke-width="1.6"/>
<clipPath id="ch5"><path d="M2092.2 827.9L2093.8 826.5L2095.0 824.9L2095.7 823.3L2096.0 821.6L2095.8 819.9L2095.1 818.2L2094.1 816.6L2092.6 815.1L2090.7 813.8L2088.5 812.6L2086.0 811.7L2083.3 811.0L2080.5 810.6L2077.6 810.4L2074.7 810.5L2071.8 810.8L2069.1 811.5L2066.6 812.3L2064.3 813.4L2062.4 814.7L2060.8 816.1L2059.6 817.7L2058.9 819.3L2058.6 821.0L2058.8 822.7L2059.5 824.4L2060.5 826.0L2062.0 827.5L2063.9 828.8L2066.1 830.0L2068.6 830.9L2071.3 831.6L2074.1 832.0L2077.0 832.2L2079.9 832.1L2082.8 831.8L2085.5 831.1L2088.0 830.3L2090.3 829.2Z"/></clipPath>
<g clip-path="url(#ch5)"><path d="M2064.8 804.8v30h-14v-30z" fill="#9b9a94"/><path d="M2064.8 804.8v30" stroke="#1d1d1b" stroke-width="1.4"/></g>
<path d="M2432.3 976.2L2434.1 974.5L2435.4 972.7L2436.3 970.8L2436.6 968.8L2436.4 966.8L2435.6 964.9L2434.4 963.0L2432.6 961.3L2430.5 959.8L2427.9 958.4L2425.0 957.4L2421.9 956.5L2418.6 956.0L2415.2 955.8L2411.8 955.9L2408.5 956.3L2405.3 957.1L2402.4 958.1L2399.8 959.3L2397.5 960.8L2395.7 962.5L2394.4 964.3L2393.5 966.2L2393.2 968.2L2393.4 970.2L2394.2 972.1L2395.4 974.0L2397.2 975.7L2399.3 977.2L2401.9 978.6L2404.8 979.6L2407.9 980.5L2411.2 981.0L2414.6 981.2L2418.0 981.1L2421.3 980.7L2424.5 979.9L2427.4 978.9L2430.0 977.7Z" fill="#b7b5a9" stroke="#1d1d1b" stroke-width="1.8"/>
<path d="M2429.8 977.6L2431.4 976.2L2432.6 974.6L2433.3 973.0L2433.6 971.3L2433.4 969.6L2432.7 967.9L2431.7 966.3L2430.2 964.8L2428.3 963.5L2426.1 962.3L2423.6 961.4L2420.9 960.7L2418.1 960.3L2415.2 960.1L2412.3 960.2L2409.4 960.5L2406.7 961.2L2404.2 962.0L2401.9 963.1L2400.0 964.4L2398.4 965.8L2397.2 967.4L2396.5 969.0L2396.2 970.7L2396.4 972.4L2397.1 974.1L2398.1 975.7L2399.6 977.2L2401.5 978.5L2403.7 979.7L2406.2 980.6L2408.9 981.3L2411.7 981.7L2414.6 981.9L2417.5 981.8L2420.4 981.5L2423.1 980.8L2425.6 980.0L2427.9 978.9Z" fill="url(#gHole)" stroke="#1d1d1b" stroke-width="1.6"/>
<clipPath id="ch6"><path d="M2429.8 977.6L2431.4 976.2L2432.6 974.6L2433.3 973.0L2433.6 971.3L2433.4 969.6L2432.7 967.9L2431.7 966.3L2430.2 964.8L2428.3 963.5L2426.1 962.3L2423.6 961.4L2420.9 960.7L2418.1 960.3L2415.2 960.1L2412.3 960.2L2409.4 960.5L2406.7 961.2L2404.2 962.0L2401.9 963.1L2400.0 964.4L2398.4 965.8L2397.2 967.4L2396.5 969.0L2396.2 970.7L2396.4 972.4L2397.1 974.1L2398.1 975.7L2399.6 977.2L2401.5 978.5L2403.7 979.7L2406.2 980.6L2408.9 981.3L2411.7 981.7L2414.6 981.9L2417.5 981.8L2420.4 981.5L2423.1 980.8L2425.6 980.0L2427.9 978.9Z"/></clipPath>
<g clip-path="url(#ch6)"><path d="M2402.4 954.5v30h-14v-30z" fill="#9b9a94"/><path d="M2402.4 954.5v30" stroke="#1d1d1b" stroke-width="1.4"/></g>
<path d="M1840.0 691.9L1842.2 689.8L1843.6 687.5L1844.2 685.2L1844.0 682.7L1843.1 680.4L1841.3 678.2L1838.9 676.2L1835.8 674.6L1832.3 673.3L1828.4 672.5L1824.3 672.1L1820.2 672.2L1816.2 672.7L1812.4 673.7L1809.1 675.1L1806.3 676.9L1771.5 703.8L1769.3 705.9L1767.9 708.2L1767.3 710.5L1767.5 713.0L1768.4 715.3L1770.2 717.5L1772.6 719.5L1775.7 721.1L1779.2 722.4L1783.1 723.2L1787.2 723.6L1791.3 723.5L1795.3 723.0L1799.1 722.0L1802.4 720.6L1805.2 718.8Z" fill="#bdbbb0" stroke="#1d1d1b" stroke-width="1.8"/>
<clipPath id="cs1788"><path d="M1837.3 692.9L1839.1 691.1L1840.3 689.2L1840.9 687.2L1840.7 685.2L1839.9 683.2L1838.4 681.4L1836.4 679.7L1833.8 678.4L1830.8 677.3L1827.6 676.6L1824.1 676.3L1820.7 676.3L1817.3 676.8L1814.2 677.6L1811.4 678.8L1809.0 680.3L1774.2 707.2L1772.4 709.0L1771.2 710.9L1770.6 712.9L1770.8 714.9L1771.6 716.9L1773.1 718.7L1775.1 720.4L1777.7 721.7L1780.7 722.8L1783.9 723.5L1787.4 723.8L1790.8 723.8L1794.2 723.3L1797.3 722.5L1800.1 721.3L1802.5 719.8Z"/></clipPath>
<path d="M1837.3 692.9L1839.1 691.1L1840.3 689.2L1840.9 687.2L1840.7 685.2L1839.9 683.2L1838.4 681.4L1836.4 679.7L1833.8 678.4L1830.8 677.3L1827.6 676.6L1824.1 676.3L1820.7 676.3L1817.3 676.8L1814.2 677.6L1811.4 678.8L1809.0 680.3L1774.2 707.2L1772.4 709.0L1771.2 710.9L1770.6 712.9L1770.8 714.9L1771.6 716.9L1773.1 718.7L1775.1 720.4L1777.7 721.7L1780.7 722.8L1783.9 723.5L1787.4 723.8L1790.8 723.8L1794.2 723.3L1797.3 722.5L1800.1 721.3L1802.5 719.8Z" fill="url(#gSlot)" stroke="#1d1d1b" stroke-width="1.6"/>
<g clip-path="url(#cs1788)"><path d="M1837.3 720.4L1839.1 718.6L1840.3 716.7L1840.9 714.7L1840.7 712.7L1839.9 710.7L1838.4 708.9L1836.4 707.2L1833.8 705.9L1830.8 704.8L1827.6 704.1L1824.1 703.8L1820.7 703.8L1817.3 704.3L1814.2 705.1L1811.4 706.3L1809.0 707.8L1774.2 734.7L1772.4 736.5L1771.2 738.4L1770.6 740.4L1770.8 742.4L1771.6 744.4L1773.1 746.2L1775.1 747.9L1777.7 749.2L1780.7 750.3L1783.9 751.0L1787.4 751.3L1790.8 751.3L1794.2 750.8L1797.3 750.0L1800.1 748.8L1802.5 747.3Z" fill="#44803b" stroke="#2a3a25" stroke-width="1.4"/>
<path d="M1810.0 677.7v40" stroke="#1d1d1b" stroke-width="1.5"/></g>
<path d="M1926.2 691.9L1928.3 689.9L1929.8 687.6L1930.4 685.2L1930.2 682.8L1929.2 680.5L1927.5 678.3L1925.0 676.3L1922.0 674.7L1918.4 673.4L1914.6 672.5L1910.5 672.2L1906.3 672.2L1902.3 672.8L1898.6 673.8L1895.3 675.2L1892.5 677.0L1794.3 752.9L1792.2 754.9L1790.7 757.2L1790.1 759.6L1790.3 762.0L1791.3 764.3L1793.0 766.5L1795.5 768.5L1798.5 770.1L1802.1 771.4L1805.9 772.3L1810.0 772.6L1814.2 772.6L1818.2 772.0L1821.9 771.0L1825.2 769.6L1828.0 767.8Z" fill="#bdbbb0" stroke="#1d1d1b" stroke-width="1.8"/>
<clipPath id="cs1811"><path d="M1923.5 692.9L1925.3 691.2L1926.5 689.3L1927.0 687.3L1926.9 685.3L1926.0 683.3L1924.6 681.5L1922.5 679.8L1919.9 678.4L1917.0 677.4L1913.7 676.6L1910.3 676.3L1906.8 676.4L1903.5 676.8L1900.3 677.7L1897.5 678.9L1895.2 680.4L1797.0 756.3L1795.2 758.0L1794.0 759.9L1793.5 761.9L1793.6 763.9L1794.5 765.9L1795.9 767.7L1798.0 769.4L1800.6 770.8L1803.5 771.8L1806.8 772.6L1810.2 772.9L1813.7 772.8L1817.0 772.4L1820.2 771.5L1823.0 770.3L1825.3 768.8Z"/></clipPath>
<path d="M1923.5 692.9L1925.3 691.2L1926.5 689.3L1927.0 687.3L1926.9 685.3L1926.0 683.3L1924.6 681.5L1922.5 679.8L1919.9 678.4L1917.0 677.4L1913.7 676.6L1910.3 676.3L1906.8 676.4L1903.5 676.8L1900.3 677.7L1897.5 678.9L1895.2 680.4L1797.0 756.3L1795.2 758.0L1794.0 759.9L1793.5 761.9L1793.6 763.9L1794.5 765.9L1795.9 767.7L1798.0 769.4L1800.6 770.8L1803.5 771.8L1806.8 772.6L1810.2 772.9L1813.7 772.8L1817.0 772.4L1820.2 771.5L1823.0 770.3L1825.3 768.8Z" fill="url(#gSlot)" stroke="#1d1d1b" stroke-width="1.6"/>
<g clip-path="url(#cs1811)"><path d="M1923.5 720.4L1925.3 718.7L1926.5 716.8L1927.0 714.8L1926.9 712.8L1926.0 710.8L1924.6 709.0L1922.5 707.3L1919.9 705.9L1917.0 704.9L1913.7 704.1L1910.3 703.8L1906.8 703.9L1903.5 704.3L1900.3 705.2L1897.5 706.4L1895.2 707.9L1797.0 783.8L1795.2 785.5L1794.0 787.4L1793.5 789.4L1793.6 791.4L1794.5 793.4L1795.9 795.2L1798.0 796.9L1800.6 798.3L1803.5 799.3L1806.8 800.1L1810.2 800.4L1813.7 800.3L1817.0 799.9L1820.2 799.0L1823.0 797.8L1825.3 796.3Z" fill="#44803b" stroke="#2a3a25" stroke-width="1.4"/>
<path d="M1896.2 677.8v40" stroke="#1d1d1b" stroke-width="1.5"/></g>
<path d="M1948.4 739.9L1950.5 737.9L1951.9 735.6L1952.6 733.2L1952.4 730.8L1951.4 728.5L1949.6 726.3L1947.2 724.3L1944.2 722.7L1940.6 721.4L1936.7 720.5L1932.7 720.2L1928.5 720.2L1924.5 720.8L1920.8 721.8L1917.4 723.2L1914.6 725.0L1879.3 752.3L1877.2 754.3L1875.8 756.6L1875.1 759.0L1875.3 761.4L1876.3 763.7L1878.1 765.9L1880.5 767.9L1883.5 769.5L1887.1 770.8L1891.0 771.7L1895.0 772.0L1899.2 772.0L1903.2 771.4L1906.9 770.4L1910.3 769.0L1913.1 767.2Z" fill="#bdbbb0" stroke="#1d1d1b" stroke-width="1.8"/>
<clipPath id="cs1896"><path d="M1945.7 740.9L1947.5 739.2L1948.7 737.3L1949.2 735.3L1949.0 733.3L1948.2 731.3L1946.7 729.5L1944.7 727.8L1942.1 726.4L1939.2 725.4L1935.9 724.6L1932.5 724.3L1929.0 724.4L1925.6 724.9L1922.5 725.7L1919.7 726.9L1917.3 728.4L1882.0 755.7L1880.2 757.4L1879.0 759.3L1878.5 761.3L1878.7 763.3L1879.5 765.3L1881.0 767.1L1883.0 768.8L1885.6 770.2L1888.5 771.2L1891.8 772.0L1895.2 772.3L1898.7 772.2L1902.1 771.7L1905.2 770.9L1908.0 769.7L1910.4 768.2Z"/></clipPath>
<path d="M1945.7 740.9L1947.5 739.2L1948.7 737.3L1949.2 735.3L1949.0 733.3L1948.2 731.3L1946.7 729.5L1944.7 727.8L1942.1 726.4L1939.2 725.4L1935.9 724.6L1932.5 724.3L1929.0 724.4L1925.6 724.9L1922.5 725.7L1919.7 726.9L1917.3 728.4L1882.0 755.7L1880.2 757.4L1879.0 759.3L1878.5 761.3L1878.7 763.3L1879.5 765.3L1881.0 767.1L1883.0 768.8L1885.6 770.2L1888.5 771.2L1891.8 772.0L1895.2 772.3L1898.7 772.2L1902.1 771.7L1905.2 770.9L1908.0 769.7L1910.4 768.2Z" fill="url(#gSlot)" stroke="#1d1d1b" stroke-width="1.6"/>
<g clip-path="url(#cs1896)"><path d="M1945.7 768.4L1947.5 766.7L1948.7 764.8L1949.2 762.8L1949.0 760.8L1948.2 758.8L1946.7 757.0L1944.7 755.3L1942.1 753.9L1939.2 752.9L1935.9 752.1L1932.5 751.8L1929.0 751.9L1925.6 752.4L1922.5 753.2L1919.7 754.4L1917.3 755.9L1882.0 783.2L1880.2 784.9L1879.0 786.8L1878.5 788.8L1878.7 790.8L1879.5 792.8L1881.0 794.6L1883.0 796.3L1885.6 797.7L1888.5 798.7L1891.8 799.5L1895.2 799.8L1898.7 799.7L1902.1 799.2L1905.2 798.4L1908.0 797.2L1910.4 795.7Z" fill="#44803b" stroke="#2a3a25" stroke-width="1.4"/>
<path d="M1918.3 725.8v40" stroke="#1d1d1b" stroke-width="1.5"/></g>
<path d="M2018.3 752.5L2020.5 750.4L2021.9 748.2L2022.5 745.8L2022.3 743.4L2021.3 741.0L2019.6 738.8L2017.2 736.9L2014.1 735.2L2010.6 734.0L2006.7 733.1L2002.6 732.7L1998.5 732.8L1994.5 733.4L1990.7 734.4L1987.4 735.8L1984.6 737.5L1918.6 788.6L1916.4 790.7L1915.0 792.9L1914.4 795.3L1914.6 797.7L1915.6 800.1L1917.3 802.3L1919.7 804.2L1922.8 805.9L1926.3 807.1L1930.2 808.0L1934.3 808.4L1938.4 808.3L1942.4 807.7L1946.2 806.7L1949.5 805.3L1952.3 803.6Z" fill="#bdbbb0" stroke="#1d1d1b" stroke-width="1.8"/>
<clipPath id="cs1935"><path d="M2015.6 753.5L2017.4 751.8L2018.6 749.9L2019.1 747.9L2019.0 745.8L2018.2 743.9L2016.7 742.0L2014.6 740.4L2012.1 739.0L2009.1 737.9L2005.9 737.2L2002.4 736.9L1999.0 737.0L1995.6 737.4L1992.4 738.3L1989.6 739.4L1987.3 740.9L1921.3 792.0L1919.5 793.7L1918.3 795.6L1917.8 797.6L1917.9 799.7L1918.7 801.6L1920.2 803.5L1922.3 805.1L1924.8 806.5L1927.8 807.6L1931.0 808.3L1934.5 808.6L1937.9 808.5L1941.3 808.1L1944.5 807.2L1947.3 806.1L1949.6 804.6Z"/></clipPath>
<path d="M2015.6 753.5L2017.4 751.8L2018.6 749.9L2019.1 747.9L2019.0 745.8L2018.2 743.9L2016.7 742.0L2014.6 740.4L2012.1 739.0L2009.1 737.9L2005.9 737.2L2002.4 736.9L1999.0 737.0L1995.6 737.4L1992.4 738.3L1989.6 739.4L1987.3 740.9L1921.3 792.0L1919.5 793.7L1918.3 795.6L1917.8 797.6L1917.9 799.7L1918.7 801.6L1920.2 803.5L1922.3 805.1L1924.8 806.5L1927.8 807.6L1931.0 808.3L1934.5 808.6L1937.9 808.5L1941.3 808.1L1944.5 807.2L1947.3 806.1L1949.6 804.6Z" fill="url(#gSlot)" stroke="#1d1d1b" stroke-width="1.6"/>
<g clip-path="url(#cs1935)"><path d="M2015.6 781.0L2017.4 779.3L2018.6 777.4L2019.1 775.4L2019.0 773.3L2018.2 771.4L2016.7 769.5L2014.6 767.9L2012.1 766.5L2009.1 765.4L2005.9 764.7L2002.4 764.4L1999.0 764.5L1995.6 764.9L1992.4 765.8L1989.6 766.9L1987.3 768.4L1921.3 819.5L1919.5 821.2L1918.3 823.1L1917.8 825.1L1917.9 827.2L1918.7 829.1L1920.2 831.0L1922.3 832.6L1924.8 834.0L1927.8 835.1L1931.0 835.8L1934.5 836.1L1937.9 836.0L1941.3 835.6L1944.5 834.7L1947.3 833.6L1949.6 832.1Z" fill="#44803b" stroke="#2a3a25" stroke-width="1.4"/>
<path d="M1988.3 738.4v40" stroke="#1d1d1b" stroke-width="1.5"/></g>
<path d="M2056.6 788.2L2058.8 786.2L2060.2 783.9L2060.8 781.5L2060.6 779.1L2059.6 776.8L2057.9 774.6L2055.4 772.6L2052.4 771.0L2048.9 769.7L2045.0 768.9L2040.9 768.5L2036.8 768.5L2032.8 769.1L2029.0 770.1L2025.7 771.5L2022.9 773.3L1988.4 800.0L1986.2 802.0L1984.8 804.3L1984.2 806.7L1984.4 809.1L1985.4 811.4L1987.1 813.6L1989.6 815.6L1992.6 817.2L1996.1 818.5L2000.0 819.3L2004.1 819.7L2008.2 819.7L2012.2 819.1L2016.0 818.1L2019.3 816.7L2022.1 814.9Z" fill="#bdbbb0" stroke="#1d1d1b" stroke-width="1.8"/>
<clipPath id="cs2005"><path d="M2053.9 789.2L2055.7 787.5L2056.9 785.6L2057.4 783.6L2057.3 781.6L2056.5 779.6L2055.0 777.8L2052.9 776.1L2050.4 774.7L2047.4 773.7L2044.1 773.0L2040.7 772.6L2037.3 772.7L2033.9 773.2L2030.7 774.0L2027.9 775.2L2025.6 776.7L1991.1 803.4L1989.3 805.1L1988.1 807.0L1987.6 809.0L1987.7 811.0L1988.5 813.0L1990.0 814.8L1992.1 816.5L1994.6 817.9L1997.6 818.9L2000.9 819.6L2004.3 820.0L2007.7 819.9L2011.1 819.4L2014.3 818.6L2017.1 817.4L2019.4 815.9Z"/></clipPath>
<path d="M2053.9 789.2L2055.7 787.5L2056.9 785.6L2057.4 783.6L2057.3 781.6L2056.5 779.6L2055.0 777.8L2052.9 776.1L2050.4 774.7L2047.4 773.7L2044.1 773.0L2040.7 772.6L2037.3 772.7L2033.9 773.2L2030.7 774.0L2027.9 775.2L2025.6 776.7L1991.1 803.4L1989.3 805.1L1988.1 807.0L1987.6 809.0L1987.7 811.0L1988.5 813.0L1990.0 814.8L1992.1 816.5L1994.6 817.9L1997.6 818.9L2000.9 819.6L2004.3 820.0L2007.7 819.9L2011.1 819.4L2014.3 818.6L2017.1 817.4L2019.4 815.9Z" fill="url(#gSlot)" stroke="#1d1d1b" stroke-width="1.6"/>
<g clip-path="url(#cs2005)"><path d="M2053.9 816.7L2055.7 815.0L2056.9 813.1L2057.4 811.1L2057.3 809.1L2056.5 807.1L2055.0 805.3L2052.9 803.6L2050.4 802.2L2047.4 801.2L2044.1 800.5L2040.7 800.1L2037.3 800.2L2033.9 800.7L2030.7 801.5L2027.9 802.7L2025.6 804.2L1991.1 830.9L1989.3 832.6L1988.1 834.5L1987.6 836.5L1987.7 838.5L1988.5 840.5L1990.0 842.3L1992.1 844.0L1994.6 845.4L1997.6 846.4L2000.9 847.1L2004.3 847.5L2007.7 847.4L2011.1 846.9L2014.3 846.1L2017.1 844.9L2019.4 843.4Z" fill="#6f6e68" stroke="#2a3a25" stroke-width="1.4"/>
<path d="M2026.6 774.1v40" stroke="#1d1d1b" stroke-width="1.5"/></g>
<path d="M2395.2 938.8L2397.3 936.8L2398.7 934.5L2399.3 932.1L2399.2 929.7L2398.2 927.4L2396.4 925.2L2394.0 923.2L2390.9 921.5L2387.4 920.3L2383.5 919.4L2379.4 919.0L2375.3 919.1L2371.3 919.7L2367.6 920.7L2364.2 922.1L2361.4 923.8L2326.3 951.0L2324.2 953.0L2322.8 955.3L2322.2 957.7L2322.3 960.1L2323.3 962.4L2325.1 964.6L2327.5 966.6L2330.6 968.3L2334.1 969.5L2338.0 970.4L2342.1 970.8L2346.2 970.7L2350.2 970.1L2353.9 969.1L2357.3 967.7L2360.1 966.0Z" fill="#bdbbb0" stroke="#1d1d1b" stroke-width="1.8"/>
<clipPath id="cs2343"><path d="M2392.5 939.8L2394.3 938.1L2395.5 936.2L2396.0 934.2L2395.8 932.2L2395.0 930.2L2393.5 928.3L2391.5 926.7L2388.9 925.3L2386.0 924.2L2382.7 923.5L2379.3 923.2L2375.8 923.3L2372.4 923.7L2369.3 924.6L2366.5 925.8L2364.1 927.2L2329.0 954.4L2327.2 956.1L2326.0 958.0L2325.5 960.0L2325.7 962.0L2326.5 964.0L2328.0 965.9L2330.0 967.5L2332.6 968.9L2335.5 970.0L2338.8 970.7L2342.2 971.0L2345.7 970.9L2349.1 970.5L2352.2 969.6L2355.0 968.4L2357.4 967.0Z"/></clipPath>
<path d="M2392.5 939.8L2394.3 938.1L2395.5 936.2L2396.0 934.2L2395.8 932.2L2395.0 930.2L2393.5 928.3L2391.5 926.7L2388.9 925.3L2386.0 924.2L2382.7 923.5L2379.3 923.2L2375.8 923.3L2372.4 923.7L2369.3 924.6L2366.5 925.8L2364.1 927.2L2329.0 954.4L2327.2 956.1L2326.0 958.0L2325.5 960.0L2325.7 962.0L2326.5 964.0L2328.0 965.9L2330.0 967.5L2332.6 968.9L2335.5 970.0L2338.8 970.7L2342.2 971.0L2345.7 970.9L2349.1 970.5L2352.2 969.6L2355.0 968.4L2357.4 967.0Z" fill="url(#gSlot)" stroke="#1d1d1b" stroke-width="1.6"/>
<g clip-path="url(#cs2343)"><path d="M2392.5 967.3L2394.3 965.6L2395.5 963.7L2396.0 961.7L2395.8 959.7L2395.0 957.7L2393.5 955.8L2391.5 954.2L2388.9 952.8L2386.0 951.7L2382.7 951.0L2379.3 950.7L2375.8 950.8L2372.4 951.2L2369.3 952.1L2366.5 953.3L2364.1 954.7L2329.0 981.9L2327.2 983.6L2326.0 985.5L2325.5 987.5L2325.7 989.5L2326.5 991.5L2328.0 993.4L2330.0 995.0L2332.6 996.4L2335.5 997.5L2338.8 998.2L2342.2 998.5L2345.7 998.4L2349.1 998.0L2352.2 997.1L2355.0 995.9L2357.4 994.5Z" fill="#44803b" stroke="#2a3a25" stroke-width="1.4"/>
<path d="M2365.1 924.7v40" stroke="#1d1d1b" stroke-width="1.5"/></g>
<path d="M2162.7 807.6L2355.3 893.4L2276.0 955.5L2083.5 870.7Z" fill="#c6c4ba" stroke="#1d1d1b" stroke-width="1.8" stroke-linejoin="round"/>
<clipPath id="cwin"><path d="M2162.7 807.6L2355.3 893.4L2276.0 955.5L2083.5 870.7Z"/></clipPath>
<linearGradient id="gWall" gradientUnits="userSpaceOnUse" x1="2083" y1="0" x2="2355" y2="0"><stop offset="0" stop-color="#8f8e88"/><stop offset="0.3" stop-color="#7f7e78"/><stop offset="1" stop-color="#9a9993"/></linearGradient>
<g clip-path="url(#cwin)">
<path d="M2163.5 811.4L2356.1 897.2L2276.8 959.3L2084.3 874.5Z" fill="url(#gWall)" stroke="#3a3a36" stroke-width="1.3"/>
<path d="M2165.2 819.8L2357.8 905.6L2278.5 967.7L2086.0 882.9Z" fill="#579748"/>
<clipPath id="cfloor"><path d="M2165.2 819.8L2357.8 905.6L2278.5 967.7L2086.0 882.9Z"/></clipPath>
<g clip-path="url(#cfloor)">
<path d="M2050.0 831.6L2360.6 969.7L2280.6 1032.7L1970.0 894.6Z" fill="#509142"/>
<path d="M2050.0 831.6L2360.6 969.7" fill="none" stroke="#16300f" stroke-width="1.7"/>
</g>
<path d="M2165.2 819.8L2357.8 905.6L2278.5 967.7L2086.0 882.9Z" fill="none" stroke="#16300f" stroke-width="1.7" stroke-linejoin="round"/>
<path d="M2163.5 811.4L2165.2 819.8" stroke="#3a3a36" stroke-width="1.3"/>
</g>
<path d="M2162.7 807.6L2355.3 893.4L2276.0 955.5L2083.5 870.7Z" fill="none" stroke="#1d1d1b" stroke-width="1.8" stroke-linejoin="round"/>
<g fill="none" stroke="#1d1d1b" stroke-linejoin="round" stroke-linecap="round">
<path d="M1132.5 1070.8L1126.0 1076.5L1120.6 1082.6L1116.5 1088.9L1113.6 1095.6L1111.9 1102.4L1111.6 1109.2L1112.7 1116.1L1115.0 1122.8L1118.6 1129.4L1123.4 1135.6L1129.4 1141.6L1136.5 1147.1L1144.5 1152.1L1153.5 1156.6L1797.9 1442.5L1807.7 1446.3L1818.1 1449.5L1829.1 1452.0L1840.5 1453.8L1852.1 1454.8L1863.9 1455.1L1875.6 1454.5L1887.1 1453.3L1898.3 1451.2L1909.0 1448.5L1919.1 1445.0L1928.5 1441.0L1937.0 1436.3L1944.5 1431.1L2731.0 822.8L2737.5 817.1L2742.9 811.1L2747.0 804.7L2749.9 798.0L2751.6 791.3L2751.9 784.4L2750.9 777.6L2748.5 770.8L2745.0 764.3L2740.1 758.0L2734.1 752.0L2727.1 746.5L2719.0 741.5L2710.0 737.0L2065.6 451.1L2055.9 447.3L2045.4 444.1L2034.4 441.6L2023.0 439.8L2011.4 438.8L1999.7 438.5L1988.0 439.1L1976.4 440.4L1965.3 442.4L1954.5 445.1L1944.4 448.6L1935.1 452.7L1926.5 457.3L1919.0 462.5Z" stroke-width="2"/>
<path d="M1140.3 1066.4L1134.4 1071.5L1129.5 1077.0L1125.8 1082.8L1123.1 1088.8L1121.7 1095.0L1121.4 1101.2L1122.3 1107.4L1124.4 1113.5L1127.7 1119.5L1132.0 1125.2L1137.5 1130.6L1143.9 1135.6L1151.2 1140.1L1159.4 1144.2L1803.7 1430.1L1812.6 1433.6L1822.1 1436.5L1832.0 1438.7L1842.4 1440.3L1852.9 1441.3L1863.6 1441.5L1874.2 1441.0L1884.6 1439.8L1894.8 1438.0L1904.5 1435.5L1913.6 1432.4L1922.1 1428.7L1929.9 1424.4L1936.7 1419.7L2723.2 811.4L2729.1 806.3L2734.0 800.8L2737.7 795.0L2740.4 789.0L2741.8 782.8L2742.1 776.6L2741.2 770.4L2739.1 764.3L2735.9 758.3L2731.5 752.6L2726.0 747.3L2719.6 742.3L2712.3 737.7L2704.1 733.6" stroke-width="1.6"/>
<path d="M1111.6 1122.4L1111.8 1126.4L1112.5 1130.5L1113.7 1134.5L1115.3 1138.4L1117.3 1142.3L1119.8 1146.1L1122.7 1149.8L1126.0 1153.4L1129.7 1156.9L1133.8 1160.2L1138.2 1163.3L1143.0 1166.3L1148.1 1169.0L1153.5 1171.6L1797.9 1457.5L1807.7 1461.3L1818.1 1464.5L1829.1 1467.0L1840.5 1468.8L1852.1 1469.8L1863.9 1470.1L1875.6 1469.5L1887.1 1468.3L1898.3 1466.2L1909.0 1463.5L1919.1 1460.0L1928.5 1456.0L1937.0 1451.3L1944.5 1446.1L2731.0 837.8L2733.8 835.5L2736.4 833.2L2738.8 830.8L2741.1 828.3L2743.1 825.8L2744.9 823.2L2746.5 820.5L2748.0 817.9L2749.2 815.1L2750.2 812.4L2750.9 809.6L2751.5 806.8L2751.8 804.0L2751.9 801.2" stroke-width="1.8"/>
<path d="M1111.6 1445.4L1111.8 1449.4L1112.5 1453.5L1113.7 1457.5L1115.3 1461.4L1117.3 1465.3L1119.8 1469.1L1122.7 1472.8L1126.0 1476.4L1129.7 1479.9L1133.8 1483.2L1138.2 1486.3L1143.0 1489.3L1148.1 1492.0L1153.5 1494.6L1797.9 1780.5L1807.7 1784.3L1818.1 1787.5L1829.1 1790.0L1840.5 1791.8L1852.1 1792.8L1863.9 1793.1L1875.6 1792.5L1887.1 1791.3L1898.3 1789.2L1909.0 1786.5L1919.1 1783.0L1928.5 1779.0L1937.0 1774.3L1944.5 1769.1L2731.0 1160.8L2733.8 1158.5L2736.4 1156.2L2738.8 1153.8L2741.1 1151.3L2743.1 1148.8L2744.9 1146.2L2746.5 1143.5L2748.0 1140.9L2749.2 1138.1L2750.2 1135.4L2750.9 1132.6L2751.5 1129.8L2751.8 1127.0L2751.9 1124.2" stroke-width="2.2"/>
<path d="M1111.6 1107.4V1445.4" stroke-width="2.2"/>
<path d="M2751.9 786.2V1124.2" stroke-width="2.2"/>
<path d="M1159.4 1144.2L1153.5 1156.6L1153.5 1494.6" stroke-width="1.7" stroke="#16240f"/>
<path d="M1803.7 1430.1L1797.9 1442.5L1797.9 1780.5" stroke-width="1.7" stroke="#16240f"/>
<path d="M1936.7 1419.7L1944.5 1431.1L1944.5 1769.1" stroke-width="1.7" stroke="#16240f"/>
<path d="M2723.2 811.4L2731.0 822.8L2731.0 1160.8" stroke-width="1.7" stroke="#16240f"/>
</g>
</g>
<g id="ui">
<rect x="0" y="0" width="3840" height="64" fill="#cacaca"/>
<rect x="0" y="0" width="3840" height="7" fill="#bfbfbf"/>
<path d="M386 64V15q0-7 7-7h64q7 0 7 7V64z" fill="#b9b9b9"/>
<path d="M473 64V18q0-10 10-10H3290q10 0 10 10V64z" fill="#f1f1f1"/>
<path d="M3308 63V15q0-7 7-7h41q7 0 7 7V63z" fill="#b9b9b9"/>
<rect x="0" y="64" width="3840" height="162" fill="#f1f1f1"/>
<rect x="0" y="225.5" width="3840" height="2.5" fill="#dcdcdc"/>
<rect x="0" y="228" width="3840" height="3" fill="#f0f0f0"/>
<text x="1843.0" y="48.1" font-size="25.50" fill="#3a3a3a" textLength="103.0" lengthAdjust="spacingAndGlyphs">Box v13*</text>
<rect x="24.5" y="86" width="216" height="120" rx="8" fill="#f4f4f4" stroke="#dadada" stroke-width="1.5"/>
<text x="62.0" y="152.7" font-size="23.00" fill="#2d2d2d" font-weight="bold" textLength="124.0" lengthAdjust="spacingAndGlyphs">PROGETTO</text>
<path d="M198.5 142.5h12.0l-6.0 7.0z" fill="#2d2d2d"/>
<text x="300.5" y="93.7" font-size="21.50" fill="#3c97d3" textLength="85.5" lengthAdjust="spacingAndGlyphs" stroke="#3c97d3" stroke-width="0.5">SOLIDO</text>
<text x="476.0" y="93.7" font-size="21.50" fill="#3a3a3a" textLength="116.0" lengthAdjust="spacingAndGlyphs" stroke="#3a3a3a" stroke-width="0.5">SUPERFICIE</text>
<text x="682.6" y="93.7" font-size="21.50" fill="#3a3a3a" textLength="57.4" lengthAdjust="spacingAndGlyphs" stroke="#3a3a3a" stroke-width="0.5">MESH</text>
<text x="828.0" y="93.7" font-size="21.50" fill="#3a3a3a" textLength="92.0" lengthAdjust="spacingAndGlyphs" stroke="#3a3a3a" stroke-width="0.5">LAMIERA</text>
<text x="1014.0" y="93.7" font-size="21.50" fill="#3a3a3a" textLength="101.0" lengthAdjust="spacingAndGlyphs" stroke="#3a3a3a" stroke-width="0.5">PLASTICA</text>
<text x="1211.0" y="93.7" font-size="21.50" fill="#3a3a3a" textLength="80.0" lengthAdjust="spacingAndGlyphs" stroke="#3a3a3a" stroke-width="0.5">UTILITÀ</text>
<rect x="277" y="104.5" width="136" height="6.5" rx="2" fill="#3b93d3"/>
<text x="480.0" y="215.2" font-size="21.50" fill="#3a3a3a" textLength="55.0" lengthAdjust="spacingAndGlyphs" stroke="#3a3a3a" stroke-width="0.4">CREA</text>
<path d="M542.5 202.8h11.0l-5.5 6.5z" fill="#2d2d2d"/>
<text x="1035.0" y="215.2" font-size="21.50" fill="#3a3a3a" textLength="106.0" lengthAdjust="spacingAndGlyphs" stroke="#3a3a3a" stroke-width="0.4">MODIFICA</text>
<path d="M1148.5 202.8h11.0l-5.5 6.5z" fill="#2d2d2d"/>
<text x="1442.0" y="215.2" font-size="21.50" fill="#3a3a3a" textLength="109.0" lengthAdjust="spacingAndGlyphs" stroke="#3a3a3a" stroke-width="0.4">ASSEMBLA</text>
<path d="M1557.5 202.8h11.0l-5.5 6.5z" fill="#2d2d2d"/>
<text x="1637.5" y="215.2" font-size="21.50" fill="#3a3a3a" textLength="126.5" lengthAdjust="spacingAndGlyphs" stroke="#3a3a3a" stroke-width="0.4">CONFIGURA</text>
<path d="M1769.5 202.8h11.0l-5.5 6.5z" fill="#2d2d2d"/>
<text x="1844.0" y="215.2" font-size="21.50" fill="#3a3a3a" textLength="152.0" lengthAdjust="spacingAndGlyphs" stroke="#3a3a3a" stroke-width="0.4">COSTRUZIONE</text>
<path d="M2002.1 202.8h11.0l-5.5 6.5z" fill="#2d2d2d"/>
<text x="2072.0" y="215.2" font-size="21.50" fill="#3a3a3a" textLength="94.0" lengthAdjust="spacingAndGlyphs" stroke="#3a3a3a" stroke-width="0.4">VERIFICA</text>
<path d="M2172.5 202.8h11.0l-5.5 6.5z" fill="#2d2d2d"/>
<text x="2289.7" y="215.2" font-size="21.50" fill="#3a3a3a" textLength="99.3" lengthAdjust="spacingAndGlyphs" stroke="#3a3a3a" stroke-width="0.4">INSERISCI</text>
<path d="M2394.5 202.8h11.0l-5.5 6.5z" fill="#2d2d2d"/>
<text x="2519.6" y="215.2" font-size="21.50" fill="#3a3a3a" textLength="115.4" lengthAdjust="spacingAndGlyphs" stroke="#3a3a3a" stroke-width="0.4">SELEZIONA</text>
<path d="M2641.5 202.8h11.0l-5.5 6.5z" fill="#2d2d2d"/>
<rect x="787.0" y="119" width="2" height="98" fill="#dadada"/>
<rect x="1411.0" y="119" width="2" height="98" fill="#dadada"/>
<rect x="1606.6" y="119" width="2" height="98" fill="#dadada"/>
<rect x="1813.0" y="119" width="2" height="98" fill="#dadada"/>
<rect x="2040.0" y="119" width="2" height="98" fill="#dadada"/>
<rect x="2209.0" y="119" width="2" height="98" fill="#dadada"/>
<rect x="2488.7" y="119" width="2" height="98" fill="#dadada"/>
<rect x="17.7" y="17.7" width="8" height="8" rx="1" fill="#5c5c5c"/>
<rect x="17.7" y="28.0" width="8" height="8" rx="1" fill="#5c5c5c"/>
<rect x="17.7" y="38.3" width="8" height="8" rx="1" fill="#5c5c5c"/>
<rect x="28.0" y="17.7" width="8" height="8" rx="1" fill="#5c5c5c"/>
<rect x="28.0" y="28.0" width="8" height="8" rx="1" fill="#5c5c5c"/>
<rect x="28.0" y="38.3" width="8" height="8" rx="1" fill="#5c5c5c"/>
<rect x="38.3" y="17.7" width="8" height="8" rx="1" fill="#5c5c5c"/>
<rect x="38.3" y="28.0" width="8" height="8" rx="1" fill="#5c5c5c"/>
<rect x="38.3" y="38.3" width="8" height="8" rx="1" fill="#5c5c5c"/>
<path d="M84.5 16.5h15.5l10.5 10.5v20.5h-26z" fill="#5c5c5c"/>
<path d="M100.5 17.5v9h9" fill="none" stroke="#cacaca" stroke-width="2"/>
<path d="M123 26.5h12.5l-6.2 8z" fill="#5c5c5c"/>
<path d="M174.5 20q0-2.5 2.5-2.5h20l5.5 5.5v19.5q0 2.5-2.5 2.5h-23q-2.5 0-2.5-2.5z" fill="#5c5c5c"/>
<rect x="180.5" y="19.5" width="14" height="9" fill="#cacaca"/>
<rect x="189" y="20.500" width="3.500" height="6.500" fill="#5c5c5c"/>
<rect x="180" y="33.500" width="17" height="11.500" fill="#cacaca"/>
<rect x="183" y="37" width="11" height="8" fill="#5c5c5c"/>
<path d="M263.500 42.500c0-9-5-14.500-17-14.500" fill="none" stroke="#5c5c5c" stroke-width="4.200" stroke-linecap="round"/>
<path d="M252 19.500l-10.500 8.500l10.500 8.500" fill="none" stroke="#5c5c5c" stroke-width="4.200" stroke-linecap="round" stroke-linejoin="round"/>
<path d="M281 26.500h12.500l-6.200 8z" fill="#5c5c5c"/>
<path d="M322 42.500c0-9 5-14.500 17-14.500" fill="none" stroke="#8f8f8f" stroke-width="4" stroke-linecap="round"/>
<path d="M333.500 19.500l10.500 8.500l-10.500 8.500" fill="none" stroke="#8f8f8f" stroke-width="4" stroke-linecap="round" stroke-linejoin="round"/>
<path d="M359 26.500h12l-6 7.500z" fill="#8f8f8f"/>
<path d="M428 26l-15 13.500h4.500v12h8v-8h5.500v8h8v-12h4.500l-5-4.500v-6.500h-4v3z" fill="#8a8a8a"/>
<path d="M1818 25.500l13.500 5.500v15l-13.500 6.500l-13.500-6.500v-15z" fill="#e8822a"/>
<path d="M1818 25.500l13.500 5.500l-13.500 6l-13.500-6z" fill="#f6b27a"/>
<path d="M1818 37v15.500l13.500-6.500v-15z" fill="#c8661a"/>
<path d="M3268.500 27l18 18m0-18l-18 18" stroke="#4f4f4f" stroke-width="2.600" fill="none"/>
<path d="M3322.500 35h27m-13.500-13.500v27" stroke="#6c6c6c" stroke-width="5.500" fill="none"/>
<circle cx="3403.600" cy="32.300" r="17" fill="#2e90da"/>
<path d="M3400 27.500v14m-7-7h14" stroke="#fff" stroke-width="3.600" stroke-linecap="round"/>
<circle cx="3410" cy="24.500" r="2.300" fill="#fff"/><circle cx="3413" cy="33" r="1.800" fill="#fff"/><circle cx="3396" cy="23.500" r="1.600" fill="#fff"/>
<circle cx="3469" cy="32" r="14.500" fill="none" stroke="#4c4c4c" stroke-width="3.600"/>
<path d="M3462 27.500l8-5.500l7 9.500l-6.500 6.500l-4.500 0.500l-3.500 5l-4-3l3.500-5z" fill="#4c4c4c"/>
<path d="M3474.500 20.500l3.500-3m2 10.500l3.500-3" stroke="#4c4c4c" stroke-width="2.600" stroke-linecap="round"/>
<circle cx="3535.600" cy="31.500" r="15" fill="none" stroke="#4c4c4c" stroke-width="2.200"/>
<circle cx="3535.600" cy="31.500" r="11" fill="none" stroke="#4c4c4c" stroke-width="3"/>
<path d="M3535.600 24v8.500h7" fill="none" stroke="#4c4c4c" stroke-width="2.600"/>
<text x="3560" y="40" font-size="24" fill="#3c3c3c">1</text>
<path d="M3641.700 17.500c-7 0-9.500 5.500-9.500 11.500c0 6-2.500 9.500-4.500 12h28c-2-2.500-4.500-6-4.500-12c0-6-2.500-11.500-9.500-11.500z" fill="#4c4c4c"/>
<path d="M3637.500 43.500h8.500q-1 3.500-4.250 3.500t-4.250-3.500z" fill="#4c4c4c"/>
<circle cx="3650.700" cy="24" r="5.500" fill="#3a9be0"/>
<circle cx="3707.500" cy="32" r="16.500" fill="#4f4f4f"/>
<text x="3707.500" y="42" font-size="28" font-weight="bold" fill="#f1f1f1" text-anchor="middle">?</text>
<clipPath id="avc"><circle cx="3790" cy="32" r="24"/></clipPath>
<circle cx="3790" cy="32" r="24" fill="#aab6d0"/>
<g clip-path="url(#avc)"><ellipse cx="3790" cy="27" rx="10.500" ry="13" fill="#4d5f82"/><path d="M3768 60c0-12 8-17 22-17s22 5 22 17z" fill="#4d5f82"/></g>
<g stroke="#555" stroke-width="2.4" fill="none">
<path d="M283 119.500h44M276 126v44M331.500 126v24M283 175.500h26"/>
<path d="M298 135h14" stroke-dasharray="9 4"/><path d="M291 142v14" stroke-dasharray="9 4"/>
<path d="M317.500 137c0 14-9 22-23 23.500"/>
</g>
<rect x="272.5" y="116.0" width="7" height="7" fill="#555"/>
<rect x="328.0" y="116.0" width="7" height="7" fill="#555"/>
<rect x="272.5" y="172.0" width="7" height="7" fill="#555"/>
<rect x="288.0" y="132.0" width="6" height="6" fill="#555"/>
<rect x="314.5" y="132.0" width="6" height="6" fill="#555"/>
<rect x="288.0" y="158.0" width="6" height="6" fill="#555"/>
<path d="M319.7 153.8h9.0v9.5h9.5v9.0h-9.5v9.5h-9.0v-9.5h-9.5v-9.0h9.5z" fill="#3fae49" stroke="#2c8a36" stroke-width="1.5"/>
<path d="M362.500 172l34 0l12.500-10.500v8l-12.500 10.500h-34z" fill="#b9b9b9"/>
<path d="M362.500 172h34.500v8h-34.500z" fill="#c9c9c9"/>
<path d="M363 128.500h34v43.500h-34z" fill="#73b0ea"/>
<path d="M363 128.500l12.500-10h34l-12.500 10z" fill="#9dcdf7"/>
<path d="M397 128.500l12.500-10v43l-12.500 10.500z" fill="#4f90d3"/>
<path d="M362.500 172.500h34.500l12.500-10.500" fill="none" stroke="#d8ecfc" stroke-width="2"/>
<path d="M417.400 169v-40" stroke="#333" stroke-width="2.600"/><path d="M417.400 120.500l5.500 10.500h-11z" fill="#333"/>
<path d="M446.500 146c8-8 20-12 32-12c12 0 23 3 31.500 9.500l0 18c-8-5-18-8-31.500-8c-11 0-21 3-32 11z" fill="#9dcdf7"/>
<path d="M446.500 146v19c0 0 6 7 12 9.500c8-5 16-6.500 24-6.500c8 0 15 1.500 19 4l0-10.500c-6-3-13-5-23-5c-11 0-21 3-32 -10.500z" fill="#73b0ea"/>
<path d="M446.500 146c4 5 8 8 12 9.500v19c-5-2-10-6-12-9.500z" fill="#4f90d3"/>
<path d="M458.500 155.500c7-4.500 14-6 20-6c8 0 16 2 22 5.500v17c-6-3-12-4.500-20-4.500c-8 0-15 2-22 7z" fill="#73b0ea"/>
<path d="M500.500 155l9.500-11.500v18l-9.500 11z" fill="#fff" stroke="#444" stroke-width="2"/>
<path d="M451 131c8-7 18-10.500 28-10.500c10 0 19 3.500 26 10" fill="none" stroke="#333" stroke-width="2.200"/>
<path d="M447.500 133.500l10-3l-5.500-7z" fill="#333"/>
<path d="M533 128l11-9.500h51.500v52l-11 10.500h-51.500z" fill="#dcdcdc" stroke="#5e5e5e" stroke-width="2.400" stroke-linejoin="round"/>
<path d="M533 128l11-9.500h51.500l-11 9.500z" fill="#f2f2f2"/>
<path d="M584.500 128l11-9.500v52l-11 10.500z" fill="#bdbdbd"/>
<path d="M533 128h51.500v53M584.500 128l11-9.500" fill="none" stroke="#8a8a8a" stroke-width="1.600"/>
<path d="M533 128l11-9.500h51.500v52l-11 10.500h-51.500z" fill="none" stroke="#5e5e5e" stroke-width="2.400" stroke-linejoin="round"/>
<circle cx="559" cy="154.500" r="15.500" fill="#e9e9e9" stroke="#5e5e5e" stroke-width="2.200"/>
<circle cx="559" cy="154.500" r="11.500" fill="#73b0ea"/>
<path d="M556 143.500a11.500 11.500 0 0 1 14 14a12 12 0 0 1-14-14z" fill="#fff"/>
<path d="M625.200 128.700h42.200M625.200 128.700v42.100M625.200 170.800h42.200" fill="none" stroke="#666" stroke-width="2.600"/>
<rect x="618.500" y="122" width="13.400" height="13.400" fill="#fff" stroke="#666" stroke-width="2"/>
<rect x="660.7" y="122.0" width="13.400" height="13.400" fill="#6aa9e4" stroke="#8cc0f0" stroke-width="1"/>
<rect x="618.5" y="164.1" width="13.400" height="13.400" fill="#6aa9e4" stroke="#8cc0f0" stroke-width="1"/>
<rect x="660.7" y="164.1" width="13.400" height="13.400" fill="#6aa9e4" stroke="#8cc0f0" stroke-width="1"/>
<path d="M706 140q0-17 17-17h22q17 0 17 14v27q0 17-17 17h-22q-17 0-17-17z" fill="#c9b3f3"/>
<path d="M709 147q0-13 13-13h18q13 0 13 13v19q0 13-13 13h-18q-13 0-13-13z" fill="#a07ae6"/>
<path d="M753 142l8.500-6v27q0 10-8.500 15z" fill="#7e58cc"/>
<path d="M731 134v45M709 157h44" stroke="#7e58cc" stroke-width="1.600" fill="none"/>
<path d="M751.8 120.4L754.4 127.8L760.9 123.4L758.7 130.9L766.5 131.1L760.3 135.9L766.5 140.7L758.7 140.9L760.9 148.4L754.4 144.0L751.8 151.4L749.2 144.0L742.7 148.4L744.9 140.9L737.1 140.7L743.3 135.9L737.1 131.1L744.9 130.9L742.7 123.4L749.2 127.8Z" fill="#f5a300"/>
<path d="M815 131l8-11.500h10v61h-18z" fill="#f2f2f2" stroke="#5e5e5e" stroke-width="2.200" stroke-linejoin="round"/>
<path d="M829.500 129h22v52h-22z" fill="#73b0ea"/>
<path d="M829.500 129l6.500-9.500h22l-6.500 9.500z" fill="#9dcdf7"/>
<path d="M851.500 129l6.500-9.500v52l-6.500 9.500z" fill="#4f90d3"/>
<rect x="852.500" y="145.500" width="9" height="6.500" rx="3" fill="#fff"/>
<path d="M855 148.800h10" stroke="#222" stroke-width="2.400"/><path d="M872 148.800l-9-5.500v11z" fill="#222"/>
<path d="M898.500 131l12-11.500h18q30 3 33 32v16l-12 13.500h-51z" fill="#dcdcdc" stroke="#5e5e5e" stroke-width="2.400" stroke-linejoin="round"/>
<path d="M898.500 131l12-11.500h18l-8 11.500z" fill="#f2f2f2"/>
<path d="M949.500 161l12-11v18l-12 13.500z" fill="#bdbdbd"/>
<path d="M920.500 131l11-11.500c18 2 29 14 30 30.500l-11 11c-2-16-12-28-30-30z" fill="#73b0ea"/>
<path d="M950.500 161l11-11.500" stroke="#fff" stroke-width="2" fill="none"/>
<path d="M898.500 131l12-11.500h18q30 3 33 32v16l-12 13.500h-51z" fill="none" stroke="#5e5e5e" stroke-width="2.400" stroke-linejoin="round"/>
<path d="M985.500 131l13-11.500h48.500v48l-13 13.500h-48.500z" fill="#dcdcdc" stroke="#5e5e5e" stroke-width="2.400" stroke-linejoin="round"/>
<path d="M985.500 131l13-11.500h48.500l-13 11.500z" fill="#f2f2f2"/>
<path d="M1034 131l13-11.500v48l-13 13.500z" fill="#bdbdbd"/>
<rect x="992.500" y="142" width="33" height="32" fill="#fff"/>
<path d="M992.500 142h15v18h18v14h-33z" fill="#9dcdf7"/>
<path d="M992.500 142h15l-8 8v17l-7 7z" fill="#4f90d3"/>
<path d="M999.500 150l8-8v18h18l-9 7h-17z" fill="#73b0ea"/>
<path d="M985.500 131l13-11.500h48.500v48l-13 13.500h-48.500z" fill="none" stroke="#5e5e5e" stroke-width="2.400" stroke-linejoin="round"/>
<path d="M1071 141l10-9.500h14v-3l10-9.500h29v38l-10 9.500h-14v6l-10 8.500h-29z" fill="#73b0ea"/>
<path d="M1071 141l10-9.500h14v-3l10-9.500h29l-10 9.500h-29v12.500z" fill="#9dcdf7"/>
<path d="M1124 128.500l10-9.500v38l-10 9.500zM1100 172.500l10-8.500v-7l-10 9.500z" fill="#4f90d3"/>
<path d="M1158 131l10-11h50v24l-10 11h-50z" fill="#73b0ea"/>
<path d="M1158 131l10-11h50l-10 11z" fill="#9dcdf7"/>
<path d="M1208 131l10-11v24l-10 11z" fill="#4f90d3"/>
<path d="M1158 160h50l10-10.500v20l-10 11h-50z" fill="#dcdcdc" stroke="#5e5e5e" stroke-width="2.200" stroke-linejoin="round"/>
<path d="M1208 160l10-10.500v20l-10 11z" fill="#bdbdbd"/>
<path d="M1155 157.500h53.500l12-13" fill="none" stroke="#fff" stroke-width="3.400"/>
<path d="M1155 155.500h53l11.500-12.500" fill="none" stroke="#a9d3f8" stroke-width="1.400"/>
<path d="M1273.600 130v40M1253.500 150h40" stroke="#2e2e2e" stroke-width="4" fill="none"/>
<path d="M1273.600 119l8.500 13h-17zM1273.600 181l8.500-13h-17zM1242.500 150l13-8.500v17zM1304.700 150l-13-8.500v17z" fill="#2e2e2e"/>
<text x="1327" y="171" style="font-family:'Liberation Serif',serif;font-style:italic" font-size="76" fill="#555" textLength="66" lengthAdjust="spacingAndGlyphs">fx</text>
<path d="M1436 159h27v22.500h-27z" fill="#dcdcdc"/>
<path d="M1463 159l8-7h27l-8 7z" fill="#f2f2f2"/>
<path d="M1463 159h27v22.500h-27z" fill="#dcdcdc"/>
<path d="M1490 159l8-7v22l-8 7.500z" fill="#bdbdbd"/>
<path d="M1436 159v22.500h54l8-7.500v-22M1463 159v22.500M1463 159h27l8-7" fill="none" stroke="#5e5e5e" stroke-width="2.200" stroke-linejoin="round"/>
<path d="M1436 135h27v24h-27z" fill="#73b0ea"/>
<path d="M1436 135l7-7.500h27l-7 7.500z" fill="#9dcdf7"/>
<path d="M1463 135l7-7.500v24l-7 7.500z" fill="#4f90d3"/>
<path d="M1482.7 118.6L1485.3 126.5L1492.1 121.7L1489.6 129.6L1497.9 129.7L1491.2 134.6L1497.9 139.5L1489.6 139.6L1492.1 147.5L1485.3 142.7L1482.7 150.6L1480.1 142.7L1473.3 147.5L1475.8 139.6L1467.5 139.5L1474.2 134.6L1467.5 129.7L1475.8 129.6L1473.3 121.7L1480.1 126.5Z" fill="#f5a300"/>
<path d="M1527 145l14-19.500q4-5.500 11-3v25l-10 6v15l-15 10z" fill="#dcdcdc" stroke="#5e5e5e" stroke-width="2.400" stroke-linejoin="round"/>
<path d="M1541 125.500q4-5.500 11-3v12q-6-1-11 3z" fill="#f2f2f2" stroke="#5e5e5e" stroke-width="1.600"/>
<path d="M1546 148v10" stroke="#4a9be8" stroke-width="2"/>
<path d="M1568 128l14 14v35l-14-12v-4l-10 3v-20q4-4 10-2z" fill="#dcdcdc" stroke="#5e5e5e" stroke-width="2.400" stroke-linejoin="round"/>
<path d="M1558 144q4-4 10-2v18l-10 3z" fill="#bdbdbd" stroke="#5e5e5e" stroke-width="1.600"/>
<path d="M1562.500 132v9" stroke="#5e5e5e" stroke-width="1.800"/>
<path d="M1638.500 130l11-10.500h38v44l-11 10.500h-38z" fill="#e6e6e6" stroke="#c4c4c4" stroke-width="2" stroke-linejoin="round"/>
<path d="M1638.500 130l11-10.500h38l-11 10.500z" fill="#f6f6f6"/>
<circle cx="1686.400" cy="134.600" r="16.200" fill="#2e8fd9"/>
<path d="M1683 129v14m-7-7h14" stroke="#fff" stroke-width="3.600" stroke-linecap="round"/><circle cx="1693" cy="127" r="2.200" fill="#fff"/><circle cx="1696" cy="135" r="1.600" fill="#fff"/><circle cx="1688.500" cy="123.500" r="1.500" fill="#fff"/>
<rect x="1672" y="156" width="32" height="28" fill="#f1f1f1"/>
<path d="M1674.500 163.500h27.500M1674.500 176h27.500" stroke="#b9b9b9" stroke-width="3"/><path d="M1682 158v11M1694.500 170.500v11" stroke="#b9b9b9" stroke-width="3.200"/>
<path d="M1690 154v6M1694 152v8" stroke="#9ec9f0" stroke-width="1.500"/>
<rect x="1724.500" y="118.500" width="58" height="57" fill="#ececec" stroke="#c4c4c4" stroke-width="2"/>
<rect x="1724.500" y="118.500" width="58" height="9" fill="#c4c4c4"/>
<rect x="1728" y="121" width="8" height="3.500" fill="#f4f4f4"/>
<rect x="1731.0" y="137.0" width="8.500" height="8.500" fill="#fff" stroke="#d2d2d2" stroke-width="1"/>
<rect x="1731.0" y="149.0" width="8.500" height="8.500" fill="#fff" stroke="#d2d2d2" stroke-width="1"/>
<rect x="1731.0" y="161.0" width="8.500" height="8.500" fill="#fff" stroke="#d2d2d2" stroke-width="1"/>
<rect x="1743.0" y="137.0" width="8.500" height="8.500" fill="#fff" stroke="#d2d2d2" stroke-width="1"/>
<rect x="1743.0" y="149.0" width="8.500" height="8.500" fill="#fff" stroke="#d2d2d2" stroke-width="1"/>
<rect x="1743.0" y="161.0" width="8.500" height="8.500" fill="#fff" stroke="#d2d2d2" stroke-width="1"/>
<rect x="1755.0" y="137.0" width="8.500" height="8.500" fill="#fff" stroke="#d2d2d2" stroke-width="1"/>
<rect x="1755.0" y="149.0" width="8.500" height="8.500" fill="#fff" stroke="#d2d2d2" stroke-width="1"/>
<rect x="1755.0" y="161.0" width="8.500" height="8.500" fill="#fff" stroke="#d2d2d2" stroke-width="1"/>
<rect x="1767.0" y="137.0" width="8.500" height="8.500" fill="#fff" stroke="#d2d2d2" stroke-width="1"/>
<rect x="1767.0" y="149.0" width="8.500" height="8.500" fill="#fff" stroke="#d2d2d2" stroke-width="1"/>
<rect x="1767.0" y="161.0" width="8.500" height="8.500" fill="#fff" stroke="#d2d2d2" stroke-width="1"/>
<circle cx="1772.800" cy="134.600" r="16.200" fill="#2e8fd9"/>
<path d="M1769.500 129v14m-7-7h14" stroke="#fff" stroke-width="3.600" stroke-linecap="round"/><circle cx="1779.500" cy="127" r="2.200" fill="#fff"/><circle cx="1782.500" cy="135" r="1.600" fill="#fff"/><circle cx="1775" cy="123.500" r="1.500" fill="#fff"/>
<rect x="1758" y="154" width="33" height="30" fill="#f1f1f1"/>
<path d="M1761 163.500h27.500M1761 176h27.500" stroke="#b9b9b9" stroke-width="3"/><path d="M1768.500 158v11M1781 170.500v11" stroke="#b9b9b9" stroke-width="3.200"/>
<path d="M1900.500 137l16-17h14l-16 17v42h-14z" fill="#f2f2f2" stroke="#4a4a4a" stroke-width="2.400" stroke-linejoin="round"/>
<path d="M1903 139h10v38h-10z" fill="#dcdcdc"/>
<path d="M1918 139l17-18v43l-17 14z" fill="#5fc06a"/>
<path d="M1943 138l17-18v42l-17 15z" fill="#e8975a"/>
<path d="M2101 133.500v19M2156 133.500v19" stroke="#5a5a5a" stroke-width="2.600"/>
<path d="M2108 143h41" stroke="#5a5a5a" stroke-width="2.400"/><path d="M2102.500 143l9-5v10zM2154.500 143l-9-5v10z" fill="#5a5a5a"/>
<rect x="2100" y="154.700" width="56" height="10.700" fill="#f6a91f"/>
<path d="M2105 154.700v3.500m7-3.500v3.500m7-3.500v3.500m7-3.500v3.500m7-3.500v3.500m7-3.500v3.500m7-3.500v3.500" stroke="#6b4a10" stroke-width="1.600"/>
<path d="M2243 138l11-11h40v40l-11 10h-40z" fill="#dcdcdc" stroke="#5e5e5e" stroke-width="2.200" stroke-linejoin="round"/>
<path d="M2243 138l11-11h40l-11 11z" fill="#f2f2f2"/>
<path d="M2283 138l11-11v40l-11 10z" fill="#bdbdbd"/>
<rect x="2232" y="121" width="22" height="18" fill="#f1f1f1"/>
<path d="M2234 126h17v-7.500l17.500 11.500l-17.500 11.500v-7.500h-17z" fill="#3a86d8"/>
<g fill="none" stroke="#222" stroke-width="4.400"><rect x="2268" y="164" width="16" height="11" rx="5.500" transform="rotate(-32 2276 169.500)"/><rect x="2281" y="156.500" width="16" height="11" rx="5.500" transform="rotate(-32 2289 162)"/></g>
<path d="M2326 123q0-3 3-3h41q3 0 3 3v10q0 3-3 3h-41q-3 0-3-3z" fill="#7ab5ec" stroke="#4f93d6" stroke-width="1.600"/>
<path d="M2338 121v14M2361 121v14" stroke="#4f93d6" stroke-width="1.400"/>
<path d="M2335 136h27v40q0 5-5 5h-17q-5 0-5-5z" fill="#8fc2f2" stroke="#5a9bda" stroke-width="1.400"/>
<path d="M2335 142h27m-27 5.500h27m-27 5.500h27m-27 5.500h27m-27 5.500h27m-27 5.500h27m-27 5.500h27" stroke="#5a9bda" stroke-width="1.500"/>
<path d="M2365.5 153.8h9.0v9.5h9.5v9.0h-9.5v9.5h-9.0v-9.5h-9.5v-9.0h9.5z" fill="#3fae49" stroke="#2c8a36" stroke-width="1.5"/>
<rect x="2408" y="120" width="58" height="57" fill="#7eb8f0" stroke="#4f93d6" stroke-width="2"/>
<path d="M2409 158c6-10 11-13 15-13c5 0 10 9 15 15c3-4 6-9 10-9c4 0 9 6 16 14v11h-56z" fill="#4b8ed0"/>
<circle cx="2449.500" cy="135.800" r="6" fill="#fcf6c8"/>
<rect x="2548" y="112" width="76" height="75.400" fill="#2f8ed8"/>
<rect x="2555" y="118.700" width="54.400" height="43.100" fill="none" stroke="#86e3b4" stroke-width="2.400" stroke-dasharray="7 4"/>
<path d="M2596 147.500v29.500l7-6l5.500 12.500l5-2.500l-5.500-12l9-1z" fill="#fff" stroke="#2f8ed8" stroke-width="1"/>
<rect x="9" y="243.5" width="598" height="47.5" fill="#f1f1f1" stroke="#d4d4d4" stroke-width="1.5"/>
<rect x="9" y="291" width="598" height="2" fill="#e3e3e3"/>
<text x="58.0" y="274.7" font-size="22.00" fill="#555" textLength="100.0" lengthAdjust="spacingAndGlyphs">BROWSER</text>
<rect x="80.6" y="302.5" width="270.4" height="38.5" fill="#efefef" fill-opacity="0.93"/>
<rect x="116.8" y="350.3" width="346.2" height="38.5" fill="#efefef" fill-opacity="0.93"/>
<rect x="116.8" y="398.7" width="250.7" height="38.5" fill="#efefef" fill-opacity="0.93"/>
<rect x="116.8" y="446.5" width="212.8" height="38.5" fill="#efefef" fill-opacity="0.93"/>
<rect x="116.8" y="494.0" width="204.2" height="39.0" fill="#efefef" fill-opacity="0.93"/>
<rect x="116.8" y="542.0" width="196.2" height="39.0" fill="#efefef" fill-opacity="0.93"/>
<rect x="116.8" y="590.0" width="212.8" height="39.0" fill="#efefef" fill-opacity="0.93"/>
<rect x="130" y="306" width="171" height="32" fill="#8d8d8d"/>
<text x="197.0" y="330.8" font-size="22.50" fill="#ffffff" font-weight="bold" textLength="87.0" lengthAdjust="spacingAndGlyphs">Box v13</text>
<text x="174.8" y="378.7" font-size="22.50" fill="#2b2b2b" textLength="263.5" lengthAdjust="spacingAndGlyphs" stroke="#2b2b2b" stroke-width="0.55">Impostazioni documento</text>
<text x="182.6" y="426.5" font-size="22.50" fill="#2b2b2b" textLength="162.9" lengthAdjust="spacingAndGlyphs" stroke="#2b2b2b" stroke-width="0.55">Viste con nome</text>
<text x="232.8" y="474.3" font-size="22.50" fill="#2b2b2b" textLength="76.5" lengthAdjust="spacingAndGlyphs" stroke="#2b2b2b" stroke-width="0.55">Origine</text>
<text x="232.8" y="522.1" font-size="22.50" fill="#2b2b2b" textLength="69.2" lengthAdjust="spacingAndGlyphs" stroke="#2b2b2b" stroke-width="0.55">Analisi</text>
<text x="232.8" y="570.1" font-size="22.50" fill="#2b2b2b" textLength="56.2" lengthAdjust="spacingAndGlyphs" stroke="#2b2b2b" stroke-width="0.55">Corpi</text>
<text x="232.8" y="617.8" font-size="22.50" fill="#2b2b2b" textLength="72.4" lengthAdjust="spacingAndGlyphs" stroke="#2b2b2b" stroke-width="0.55">Schizzi</text>
<defs><linearGradient id="gExp" x1="0" y1="0" x2="1" y2="0"><stop offset="0" stop-color="#b5b5b5"/><stop offset="1" stop-color="#ffffff"/></linearGradient><linearGradient id="gExp2" x1="0" y1="0" x2="1" y2="1"><stop offset="0.3" stop-color="#e8e8e8"/><stop offset="1" stop-color="#555"/></linearGradient></defs>
<path d="M28 266.800l10-7.500v15zM18 266.800l10-7.500v15z" fill="#2b2b2b"/>
<circle cx="574.8" cy="266.8" r="9.5" fill="#1f1f1f"/><path d="M569.3 266.8h11.0" stroke="#fff" stroke-width="2.800"/>
<path d="M64 311v22h-22z" fill="url(#gExp2)" stroke="#2b2b2b" stroke-width="2" stroke-linejoin="round"/>
<path d="M86.5 322.5q15.500-18 31 0q-15.500 18-31 0z" fill="#9c9c9c"/><circle cx="102.0" cy="322.5" r="6.500" fill="#efefef"/><circle cx="102.0" cy="322.5" r="3.600" fill="#9c9c9c"/>
<path d="M136.500 313.500q0-3 3-3l5-3.500h20q3 0 3 3v20l-5 6h-23q-3 0-3-3z" fill="#fff" stroke="#3a3a3a" stroke-width="2" stroke-linejoin="round"/>
<rect x="140" y="314" width="18" height="18" fill="#d9dde6"/>
<path d="M162.500 311l4-3.500v22l-4 5z" fill="#b9bcc4"/>
<circle cx="322.600" cy="322.800" r="12.500" fill="#fff" stroke="#2b2b2b" stroke-width="2.200"/><circle cx="322.600" cy="322.800" r="4.600" fill="#2b2b2b"/>
<path d="M80.5 357.6v26l17-13z" fill="url(#gExp)" stroke="#2b2b2b" stroke-width="2.400" stroke-linejoin="round"/>
<path d="M80.5 405.4v26l17-13z" fill="url(#gExp)" stroke="#2b2b2b" stroke-width="2.400" stroke-linejoin="round"/>
<path d="M80.5 453.2v26l17-13z" fill="url(#gExp)" stroke="#2b2b2b" stroke-width="2.400" stroke-linejoin="round"/>
<path d="M80.5 501.0v26l17-13z" fill="url(#gExp)" stroke="#2b2b2b" stroke-width="2.400" stroke-linejoin="round"/>
<path d="M80.5 549.0v26l17-13z" fill="url(#gExp)" stroke="#2b2b2b" stroke-width="2.400" stroke-linejoin="round"/>
<path d="M80.5 596.7v26l17-13z" fill="url(#gExp)" stroke="#2b2b2b" stroke-width="2.400" stroke-linejoin="round"/>
<path d="M148.3 368.3L148.3 372.9L144.2 372.8L143.1 375.6L146.0 378.4L142.8 381.6L140.0 378.7L137.2 379.8L137.3 383.9L132.7 383.9L132.8 379.8L130.0 378.7L127.2 381.6L124.0 378.4L126.9 375.6L125.8 372.8L121.7 372.9L121.7 368.3L125.8 368.4L126.9 365.6L124.0 362.8L127.2 359.6L130.0 362.5L132.8 361.4L132.7 357.3L137.3 357.3L137.2 361.4L140.0 362.5L142.8 359.6L146.0 362.8L143.1 365.6L144.2 368.4ZM130.5 370.6a4.5 4.5 0 1 0 9.0 0a4.5 4.5 0 1 0 -9.0 0z" fill="#7a7a7a" fill-rule="evenodd"/>
<path d="M121.7 405.4h12l2.500 3.500h-14.500z" fill="#8e8e8e"/><path d="M121.7 410.4h32v21h-32z" fill="#8e8e8e"/>
<path d="M123.0 466.2q15-17 30 0q-15 17-30 0z" fill="none" stroke="#b9b9b9" stroke-width="2"/><circle cx="138.0" cy="466.2" r="5.500" fill="none" stroke="#b9b9b9" stroke-width="2"/><path d="M127.0 456.2l20 19" stroke="#b9b9b9" stroke-width="2.200"/><path d="M129.5 454.7l20 19" stroke="#efefef" stroke-width="1.600"/>
<path d="M171.6 453.2h12l2.500 3.500h-14.500z" fill="#8e8e8e"/><path d="M171.6 458.2h32v21h-32z" fill="#8e8e8e"/>
<path d="M123.0 514.0q15-17 30 0q-15 17-30 0z" fill="none" stroke="#b9b9b9" stroke-width="2"/><circle cx="138.0" cy="514.0" r="5.500" fill="none" stroke="#b9b9b9" stroke-width="2"/><path d="M127.0 504.0l20 19" stroke="#b9b9b9" stroke-width="2.200"/><path d="M129.5 502.5l20 19" stroke="#efefef" stroke-width="1.600"/>
<path d="M171.6 501.0h12l2.500 3.500h-14.500z" fill="#8e8e8e"/><path d="M171.6 506.0h32v21h-32z" fill="#8e8e8e"/>
<path d="M122.5 562.0q15.500-18 31 0q-15.500 18-31 0z" fill="#959595"/><circle cx="138.0" cy="562.0" r="6.500" fill="#efefef"/><circle cx="138.0" cy="562.0" r="3.600" fill="#959595"/>
<path d="M171.6 549.0h12l2.500 3.500h-14.500z" fill="#8e8e8e"/><path d="M171.6 554.0h32v21h-32z" fill="#8e8e8e"/>
<path d="M122.5 609.7q15.500-18 31 0q-15.500 18-31 0z" fill="#959595"/><circle cx="138.0" cy="609.7" r="6.500" fill="#efefef"/><circle cx="138.0" cy="609.7" r="3.600" fill="#959595"/>
<path d="M171.6 596.7h12l2.500 3.500h-14.500z" fill="#8e8e8e"/><path d="M171.6 601.7h32v21h-32z" fill="#8e8e8e"/>
<rect x="9" y="1952" width="598" height="47.5" fill="#f1f1f1" stroke="#d4d4d4" stroke-width="1.5"/>
<rect x="9" y="1999.5" width="598" height="2" fill="#e3e3e3"/>
<text x="57.8" y="1983.9" font-size="22.00" fill="#555" textLength="118.0" lengthAdjust="spacingAndGlyphs">COMMENTI</text>
<rect x="0" y="2009.5" width="3840" height="5" fill="#d0d0d0"/>
<rect x="0" y="2013.5" width="3840" height="146.5" fill="#f1f1f1"/>
<rect x="0" y="2011" width="270" height="5" fill="#cecece"/>
<rect x="3750" y="2011" width="90" height="5" fill="#cecece"/>
<rect x="270" y="2109.5" width="3480" height="2.2" fill="#d4d4d4"/>
<rect x="0" y="2157" width="3840" height="3" fill="#d6d6d6"/>
<rect x="0" y="2112" width="3" height="48" fill="#d8d8d8"/>
<rect x="3837" y="2114" width="3" height="46" fill="#d8d8d8"/>
<text x="51.0" y="2142.1" font-size="22.50" fill="#666" textLength="208.0" lengthAdjust="spacingAndGlyphs">COMANDI DI TESTO</text>
<rect x="1685" y="1950" width="472" height="47" fill="#f1f1f1" fill-opacity="0.95"/>
<circle cx="574.5" cy="1977.0" r="9.5" fill="#1f1f1f"/><path d="M569.0 1977.0h11.0" stroke="#fff" stroke-width="2.800"/><path d="M574.5 1971.5v11.0" stroke="#fff" stroke-width="2.800"/>
<circle cx="20.8" cy="2134.5" r="9.0" fill="#1f1f1f"/><path d="M15.6 2134.5h10.4" stroke="#fff" stroke-width="2.800"/><path d="M20.8 2129.3v10.4" stroke="#fff" stroke-width="2.800"/>
<path d="M1706 1989v-25" stroke="#2e2e2e" stroke-width="5" fill="none"/><path d="M1706 1989v-25" stroke="#fff" stroke-width="1.600" fill="none"/>
<path d="M1706 1957l6.500 9h-13z" fill="#fff" stroke="#2e2e2e" stroke-width="1.800" stroke-linejoin="round"/>
<path d="M1711 1970.500q9.500 2 9.500 5.500q0 5-14.500 5q-8 0-12-2" fill="none" stroke="#2e2e2e" stroke-width="2.400"/>
<path d="M1701 1970.500q-7 1.500-8.500 4" fill="none" stroke="#2e2e2e" stroke-width="2.400"/>
<path d="M1691 1978l8.500-4.500v9z" fill="#2e2e2e"/>
<path d="M1732.5 1970.0h11l-5.500 7z" fill="#2e2e2e"/>
<rect x="1757" y="1969" width="30" height="19" fill="#fff" stroke="#2e2e2e" stroke-width="2.600"/>
<rect x="1762.500" y="1975" width="19" height="7.500" fill="#888"/>
<path d="M1759 1969l9-10l3 4l6-5v11" fill="#ddd" stroke="#2e2e2e" stroke-width="2" stroke-linejoin="round"/>
<path d="M1815 1974v-11q0-2.500 2.200-2.500t2.200 2.500v-3.500q0-2.500 2.300-2.500t2.300 2.500v1q0-2.500 2.300-2.500t2.300 2.500v2.500q0-2.300 2.200-2.300t2.200 2.300v13q0 11-10 11q-7 0-10-5l-6-9q-1.500-2.500 0.500-3.500t4 1.500z" fill="#fff" stroke="#2e2e2e" stroke-width="2" stroke-linejoin="round"/>
<path d="M1819.400 1963v9M1824 1961v11M1828.600 1964v8" stroke="#2e2e2e" stroke-width="1.600"/>
<circle cx="1870" cy="1973" r="9.500" fill="#f4f4f4" stroke="#2e2e2e" stroke-width="2.600"/>
<path d="M1877 1980.500l8 8" stroke="#2e2e2e" stroke-width="4.600" stroke-linecap="round"/>
<path d="M1880 1962h10M1885 1957v10M1880 1970.500h10" stroke="#2e2e2e" stroke-width="2.200"/>
<circle cx="1924" cy="1971" r="10.500" fill="#fff" stroke="#2e2e2e" stroke-width="2.800"/>
<rect x="1918.500" y="1966" width="11" height="10" rx="2" fill="#eee" stroke="#2e2e2e" stroke-width="2"/>
<path d="M1932 1979.500l9.500 9" stroke="#2e2e2e" stroke-width="4.800" stroke-linecap="round"/>
<path d="M1954.5 1970.0h11l-5.500 7z" fill="#2e2e2e"/>
<rect x="1980" y="1959" width="29" height="23" rx="2.500" fill="#e9e9e9" stroke="#2e2e2e" stroke-width="2.400"/>
<rect x="1984.500" y="1963.500" width="20" height="14" fill="#8fb0e0" stroke="#4e6fa8" stroke-width="1.400"/>
<path d="M1988 1988h13M1991 1983v5M1998 1983v5" stroke="#2e2e2e" stroke-width="2"/>
<path d="M2014.3 1970.0h11l-5.500 7z" fill="#2e2e2e"/>
<rect x="2040.500" y="1958" width="30.500" height="30.500" fill="#fff" stroke="#555" stroke-width="2.400"/>
<path d="M2046.6 1958v30.500M2040.500 1964.1h30.500M2052.7 1958v30.500M2040.500 1970.2h30.500M2058.8 1958v30.500M2040.500 1976.3h30.500M2064.9 1958v30.500M2040.500 1982.4h30.500" stroke="#555" stroke-width="2.200" fill="none"/>
<path d="M2076.8 1970.0h11l-5.500 7z" fill="#2e2e2e"/>
<rect x="2103.0" y="1959.0" width="13" height="13" rx="1.500" fill="#a9c3ea" stroke="#3f5fa0" stroke-width="2"/>
<path d="M2103.0 1965.5h13M2109.5 1959.0v13" stroke="#d9e6f8" stroke-width="1.200"/>
<rect x="2118.5" y="1959.0" width="13" height="13" rx="1.500" fill="#a9c3ea" stroke="#3f5fa0" stroke-width="2"/>
<path d="M2118.5 1965.5h13M2125.0 1959.0v13" stroke="#d9e6f8" stroke-width="1.200"/>
<rect x="2103.0" y="1974.5" width="13" height="13" rx="1.500" fill="#a9c3ea" stroke="#3f5fa0" stroke-width="2"/>
<path d="M2103.0 1981.0h13M2109.5 1974.5v13" stroke="#d9e6f8" stroke-width="1.200"/>
<rect x="2118.5" y="1974.5" width="13" height="13" rx="1.500" fill="#a9c3ea" stroke="#3f5fa0" stroke-width="2"/>
<path d="M2118.5 1981.0h13M2125.0 1974.5v13" stroke="#d9e6f8" stroke-width="1.200"/>
<path d="M2138.0 1970.0h11l-5.500 7z" fill="#2e2e2e"/>
<path d="M23 2051.500v24" stroke="#555" stroke-width="4.200"/><path d="M44.500 2051.500v24l-19-12z" fill="#555"/>
<path d="M89 2052.500v21.500l-18-10.700z" fill="#555"/><path d="M94.500 2056.500v13.500" stroke="#555" stroke-width="4"/>
<path d="M122.500 2048v30l23-15z" fill="#555"/>
<path d="M177.500 2052.500v21.500l18-10.700z" fill="#555"/><path d="M172 2056.500v13.500" stroke="#555" stroke-width="4"/>
<path d="M243 2051.500v24" stroke="#555" stroke-width="4.200"/><path d="M221.500 2051.500v24l19-12z" fill="#555"/>
<path d="M308.6 2095.700H1509M309.6 2084.500v11M357.5 2084.500v11M405.4 2084.500v11M453.3 2084.500v11M501.2 2084.500v11M549.1 2084.500v11M597.0 2084.500v11M644.9 2084.500v11M692.8 2084.500v11M740.7 2084.500v11M788.6 2084.500v11M836.5 2084.500v11M884.4 2084.500v11M932.3 2084.500v11M980.2 2084.500v11M1028.1 2084.500v11M1076.0 2084.500v11M1123.9 2084.500v11M1171.8 2084.500v11M1219.7 2084.500v11M1267.6 2084.500v11M1315.5 2084.500v11M1363.4 2084.500v11M1411.3 2084.500v11M1459.2 2084.500v11M1507.1 2084.500v11" stroke="#c2c2c2" stroke-width="2.400" fill="none"/>
<path d="M297.8 2047.5H320.4M294.8 2050.5V2071.0M297.8 2074.0H313.4M323.4 2050.5V2062.0" stroke="#4a4a4a" stroke-width="2.200" stroke-dasharray="7 3.500" fill="none"/><rect x="292.6" y="2045.3" width="4.400" height="4.400" fill="#3f74c4"/><rect x="321.2" y="2045.3" width="4.400" height="4.400" fill="#3f74c4"/><rect x="292.6" y="2071.8" width="4.400" height="4.400" fill="#3f74c4"/><path d="M313.6 2070.5l8.500-8.500l4.600 4.600l-8.500 8.500z" fill="#f3c55a"/><path d="M322.1 2062.0l2.800-2.800l4.600 4.600l-2.800 2.800z" fill="#dc4a3d"/><path d="M312.1 2076.5l1.500-6l4.600 4.600z" fill="#4a3a2a"/>
<path d="M342.0 2070.0h17l6-4v5l-6 4.500h-17z" fill="#c3d9ee"/><path d="M342.0 2075.5h17l6-4.500" fill="none" stroke="#a9a9a9" stroke-width="1.600"/><path d="M342.0 2049.5h17v20.5h-17z" fill="#6aaae6"/><path d="M342.0 2049.5l6-4h17l-6 4z" fill="#9ccbf5"/><path d="M359.0 2049.5l6-4v20.5l-6 4z" fill="#4a8bd0"/><path d="M370.0 2071.500v-18" stroke="#2e2e2e" stroke-width="2.400"/><path d="M370.0 2047.500l3.800 7h-7.600z" fill="#2e2e2e"/>
<path d="M389.9 2070.0h17l6-4v5l-6 4.500h-17z" fill="#c3d9ee"/><path d="M389.9 2075.5h17l6-4.500" fill="none" stroke="#a9a9a9" stroke-width="1.600"/><path d="M389.9 2049.5h17v20.5h-17z" fill="#6aaae6"/><path d="M389.9 2049.5l6-4h17l-6 4z" fill="#9ccbf5"/><path d="M406.9 2049.5l6-4v20.5l-6 4z" fill="#4a8bd0"/><path d="M417.9 2071.500v-18" stroke="#2e2e2e" stroke-width="2.400"/><path d="M417.9 2047.500l3.800 7h-7.600z" fill="#2e2e2e"/>
<path d="M437.8 2070.0h17l6-4v5l-6 4.500h-17z" fill="#c3d9ee"/><path d="M437.8 2075.5h17l6-4.500" fill="none" stroke="#a9a9a9" stroke-width="1.600"/><path d="M437.8 2049.5h17v20.5h-17z" fill="#6aaae6"/><path d="M437.8 2049.5l6-4h17l-6 4z" fill="#9ccbf5"/><path d="M454.8 2049.5l6-4v20.5l-6 4z" fill="#4a8bd0"/><path d="M465.8 2071.500v-18" stroke="#2e2e2e" stroke-width="2.400"/><path d="M465.8 2047.500l3.800 7h-7.600z" fill="#2e2e2e"/>
<path d="M485.7 2070.0h17l6-4v5l-6 4.500h-17z" fill="#c3d9ee"/><path d="M485.7 2075.5h17l6-4.500" fill="none" stroke="#a9a9a9" stroke-width="1.600"/><path d="M485.7 2049.5h17v20.5h-17z" fill="#6aaae6"/><path d="M485.7 2049.5l6-4h17l-6 4z" fill="#9ccbf5"/><path d="M502.7 2049.5l6-4v20.5l-6 4z" fill="#4a8bd0"/><path d="M513.7 2071.500v-18" stroke="#2e2e2e" stroke-width="2.400"/><path d="M513.7 2047.500l3.800 7h-7.600z" fill="#2e2e2e"/>
<path d="M533.6 2070.0h17l6-4v5l-6 4.500h-17z" fill="#c3d9ee"/><path d="M533.6 2075.5h17l6-4.500" fill="none" stroke="#a9a9a9" stroke-width="1.600"/><path d="M533.6 2049.5h17v20.5h-17z" fill="#6aaae6"/><path d="M533.6 2049.5l6-4h17l-6 4z" fill="#9ccbf5"/><path d="M550.6 2049.5l6-4v20.5l-6 4z" fill="#4a8bd0"/><path d="M561.6 2071.500v-18" stroke="#2e2e2e" stroke-width="2.400"/><path d="M561.6 2047.500l3.800 7h-7.600z" fill="#2e2e2e"/>
<path d="M580.0 2063l16-16.500h10q7 0 7 7v21.500h-26q-7 0-7-7z" fill="#dedede" stroke="#4f4f4f" stroke-width="2.400" stroke-linejoin="round"/><path d="M581.0 2061l14-14.500l8 6l-14 14.500z" fill="#5e9fe0"/><path d="M588.5 2067.500l14-14.500" stroke="#fff" stroke-width="1.600"/>
<path d="M633.1 2047.5H655.7M630.1 2050.5V2071.0M633.1 2074.0H648.7M658.7 2050.5V2062.0" stroke="#4a4a4a" stroke-width="2.200" stroke-dasharray="7 3.500" fill="none"/><rect x="627.9" y="2045.3" width="4.400" height="4.400" fill="#3f74c4"/><rect x="656.5" y="2045.3" width="4.400" height="4.400" fill="#3f74c4"/><rect x="627.9" y="2071.8" width="4.400" height="4.400" fill="#3f74c4"/><path d="M648.9 2070.5l8.500-8.500l4.600 4.600l-8.500 8.500z" fill="#f3c55a"/><path d="M657.4 2062.0l2.800-2.800l4.600 4.600l-2.800 2.800z" fill="#dc4a3d"/><path d="M647.4 2076.5l1.500-6l4.600 4.600z" fill="#4a3a2a"/>
<path d="M677.3 2070.0h17l6-4v5l-6 4.500h-17z" fill="#c3d9ee"/><path d="M677.3 2075.5h17l6-4.500" fill="none" stroke="#a9a9a9" stroke-width="1.600"/><path d="M677.3 2049.5h17v20.5h-17z" fill="#6aaae6"/><path d="M677.3 2049.5l6-4h17l-6 4z" fill="#9ccbf5"/><path d="M694.3 2049.5l6-4v20.5l-6 4z" fill="#4a8bd0"/><path d="M705.3 2071.500v-18" stroke="#2e2e2e" stroke-width="2.400"/><path d="M705.3 2047.500l3.800 7h-7.600z" fill="#2e2e2e"/>
<path d="M723.7 2063l16-16.500h10q7 0 7 7v21.500h-26q-7 0-7-7z" fill="#dedede" stroke="#4f4f4f" stroke-width="2.400" stroke-linejoin="round"/><path d="M724.7 2061l14-14.500l8 6l-14 14.500z" fill="#5e9fe0"/><path d="M732.2 2067.500l14-14.500" stroke="#fff" stroke-width="1.600"/>
<path d="M773.1 2070.0h17l6-4v5l-6 4.500h-17z" fill="#c3d9ee"/><path d="M773.1 2075.5h17l6-4.500" fill="none" stroke="#a9a9a9" stroke-width="1.600"/><path d="M773.1 2049.5h17v20.5h-17z" fill="#6aaae6"/><path d="M773.1 2049.5l6-4h17l-6 4z" fill="#9ccbf5"/><path d="M790.1 2049.5l6-4v20.5l-6 4z" fill="#4a8bd0"/><path d="M801.1 2071.500v-18" stroke="#2e2e2e" stroke-width="2.400"/><path d="M801.1 2047.500l3.800 7h-7.600z" fill="#2e2e2e"/>
<path d="M824.7 2047.5H847.3M821.7 2050.5V2071.0M824.7 2074.0H840.3M850.3 2050.5V2062.0" stroke="#4a4a4a" stroke-width="2.200" stroke-dasharray="7 3.500" fill="none"/><rect x="819.5" y="2045.3" width="4.400" height="4.400" fill="#3f74c4"/><rect x="848.1" y="2045.3" width="4.400" height="4.400" fill="#3f74c4"/><rect x="819.5" y="2071.8" width="4.400" height="4.400" fill="#3f74c4"/><path d="M840.5 2070.5l8.500-8.500l4.600 4.600l-8.500 8.500z" fill="#f3c55a"/><path d="M849.0 2062.0l2.800-2.800l4.600 4.600l-2.800 2.800z" fill="#dc4a3d"/><path d="M839.0 2076.5l1.500-6l4.600 4.600z" fill="#4a3a2a"/>
<path d="M868.9 2070.0h17l6-4v5l-6 4.500h-17z" fill="#c3d9ee"/><path d="M868.9 2075.5h17l6-4.500" fill="none" stroke="#a9a9a9" stroke-width="1.600"/><path d="M868.9 2049.5h17v20.5h-17z" fill="#6aaae6"/><path d="M868.9 2049.5l6-4h17l-6 4z" fill="#9ccbf5"/><path d="M885.9 2049.5l6-4v20.5l-6 4z" fill="#4a8bd0"/><path d="M896.9 2071.500v-18" stroke="#2e2e2e" stroke-width="2.400"/><path d="M896.9 2047.500l3.800 7h-7.600z" fill="#2e2e2e"/>
<path d="M920.5 2047.5H943.1M917.5 2050.5V2071.0M920.5 2074.0H936.1M946.1 2050.5V2062.0" stroke="#4a4a4a" stroke-width="2.200" stroke-dasharray="7 3.500" fill="none"/><rect x="915.3" y="2045.3" width="4.400" height="4.400" fill="#3f74c4"/><rect x="943.9" y="2045.3" width="4.400" height="4.400" fill="#3f74c4"/><rect x="915.3" y="2071.8" width="4.400" height="4.400" fill="#3f74c4"/><path d="M936.3 2070.5l8.500-8.500l4.600 4.600l-8.500 8.500z" fill="#f3c55a"/><path d="M944.8 2062.0l2.800-2.800l4.600 4.600l-2.800 2.800z" fill="#dc4a3d"/><path d="M934.8 2076.5l1.500-6l4.600 4.600z" fill="#4a3a2a"/>
<path d="M964.7 2070.0h17l6-4v5l-6 4.500h-17z" fill="#c3d9ee"/><path d="M964.7 2075.5h17l6-4.500" fill="none" stroke="#a9a9a9" stroke-width="1.600"/><path d="M964.7 2049.5h17v20.5h-17z" fill="#6aaae6"/><path d="M964.7 2049.5l6-4h17l-6 4z" fill="#9ccbf5"/><path d="M981.7 2049.5l6-4v20.5l-6 4z" fill="#4a8bd0"/><path d="M992.7 2071.500v-18" stroke="#2e2e2e" stroke-width="2.400"/><path d="M992.7 2047.500l3.800 7h-7.600z" fill="#2e2e2e"/>
<path d="M1012.6 2070.0h17l6-4v5l-6 4.500h-17z" fill="#c3d9ee"/><path d="M1012.6 2075.5h17l6-4.500" fill="none" stroke="#a9a9a9" stroke-width="1.600"/><path d="M1012.6 2049.5h17v20.5h-17z" fill="#6aaae6"/><path d="M1012.6 2049.5l6-4h17l-6 4z" fill="#9ccbf5"/><path d="M1029.6 2049.5l6-4v20.5l-6 4z" fill="#4a8bd0"/><path d="M1040.6 2071.500v-18" stroke="#2e2e2e" stroke-width="2.400"/><path d="M1040.6 2047.500l3.800 7h-7.600z" fill="#2e2e2e"/>
<path d="M1060.5 2070.0h17l6-4v5l-6 4.500h-17z" fill="#c3d9ee"/><path d="M1060.5 2075.5h17l6-4.500" fill="none" stroke="#a9a9a9" stroke-width="1.600"/><path d="M1060.5 2049.5h17v20.5h-17z" fill="#6aaae6"/><path d="M1060.5 2049.5l6-4h17l-6 4z" fill="#9ccbf5"/><path d="M1077.5 2049.5l6-4v20.5l-6 4z" fill="#4a8bd0"/><path d="M1088.5 2071.500v-18" stroke="#2e2e2e" stroke-width="2.400"/><path d="M1088.5 2047.500l3.800 7h-7.600z" fill="#2e2e2e"/>
<path d="M1108.9 2047.500h12q16 1 17 17v11h-29z" fill="#dedede" stroke="#4f4f4f" stroke-width="2.400" stroke-linejoin="round"/><path d="M1121.4 2047.500q15 1.500 16.500 16.500l-6.500 4q-1-12-14-14.500z" fill="#5e9fe0"/>
<path d="M1156.3 2070.0h17l6-4v5l-6 4.500h-17z" fill="#c3d9ee"/><path d="M1156.3 2075.5h17l6-4.500" fill="none" stroke="#a9a9a9" stroke-width="1.600"/><path d="M1156.3 2049.5h17v20.5h-17z" fill="#6aaae6"/><path d="M1156.3 2049.5l6-4h17l-6 4z" fill="#9ccbf5"/><path d="M1173.3 2049.5l6-4v20.5l-6 4z" fill="#4a8bd0"/><path d="M1184.3 2071.500v-18" stroke="#2e2e2e" stroke-width="2.400"/><path d="M1184.3 2047.500l3.800 7h-7.600z" fill="#2e2e2e"/>
<path d="M1202.7 2063l16-16.500h10q7 0 7 7v21.500h-26q-7 0-7-7z" fill="#dedede" stroke="#4f4f4f" stroke-width="2.400" stroke-linejoin="round"/><path d="M1203.7 2061l14-14.500l8 6l-14 14.500z" fill="#5e9fe0"/><path d="M1211.2 2067.500l14-14.500" stroke="#fff" stroke-width="1.600"/>
<path d="M1255.8 2047.5H1278.4M1252.8 2050.5V2071.0M1255.8 2074.0H1271.4M1281.4 2050.5V2062.0" stroke="#4a4a4a" stroke-width="2.200" stroke-dasharray="7 3.500" fill="none"/><rect x="1250.6" y="2045.3" width="4.400" height="4.400" fill="#3f74c4"/><rect x="1279.2" y="2045.3" width="4.400" height="4.400" fill="#3f74c4"/><rect x="1250.6" y="2071.8" width="4.400" height="4.400" fill="#3f74c4"/><path d="M1271.6 2070.5l8.500-8.500l4.600 4.600l-8.500 8.500z" fill="#f3c55a"/><path d="M1280.1 2062.0l2.800-2.800l4.600 4.600l-2.800 2.800z" fill="#dc4a3d"/><path d="M1270.1 2076.5l1.500-6l4.600 4.600z" fill="#4a3a2a"/>
<path d="M1300.0 2070.0h17l6-4v5l-6 4.500h-17z" fill="#c3d9ee"/><path d="M1300.0 2075.5h17l6-4.500" fill="none" stroke="#a9a9a9" stroke-width="1.600"/><path d="M1300.0 2049.5h17v20.5h-17z" fill="#6aaae6"/><path d="M1300.0 2049.5l6-4h17l-6 4z" fill="#9ccbf5"/><path d="M1317.0 2049.5l6-4v20.5l-6 4z" fill="#4a8bd0"/><path d="M1328.0 2071.500v-18" stroke="#2e2e2e" stroke-width="2.400"/><path d="M1328.0 2047.500l3.800 7h-7.600z" fill="#2e2e2e"/>
<path d="M1347.9 2070.0h17l6-4v5l-6 4.500h-17z" fill="#c3d9ee"/><path d="M1347.9 2075.5h17l6-4.500" fill="none" stroke="#a9a9a9" stroke-width="1.600"/><path d="M1347.9 2049.5h17v20.5h-17z" fill="#6aaae6"/><path d="M1347.9 2049.5l6-4h17l-6 4z" fill="#9ccbf5"/><path d="M1364.9 2049.5l6-4v20.5l-6 4z" fill="#4a8bd0"/><path d="M1375.9 2071.500v-18" stroke="#2e2e2e" stroke-width="2.400"/><path d="M1375.9 2047.500l3.800 7h-7.600z" fill="#2e2e2e"/>
<path d="M1395.8 2070.0h17l6-4v5l-6 4.500h-17z" fill="#c3d9ee"/><path d="M1395.8 2075.5h17l6-4.500" fill="none" stroke="#a9a9a9" stroke-width="1.600"/><path d="M1395.8 2049.5h17v20.5h-17z" fill="#6aaae6"/><path d="M1395.8 2049.5l6-4h17l-6 4z" fill="#9ccbf5"/><path d="M1412.8 2049.5l6-4v20.5l-6 4z" fill="#4a8bd0"/><path d="M1423.8 2071.500v-18" stroke="#2e2e2e" stroke-width="2.400"/><path d="M1423.8 2047.500l3.800 7h-7.600z" fill="#2e2e2e"/>
<path d="M1442.2 2063l16-16.500h10q7 0 7 7v21.500h-26q-7 0-7-7z" fill="#dedede" stroke="#4f4f4f" stroke-width="2.400" stroke-linejoin="round"/><path d="M1443.2 2061l14-14.500l8 6l-14 14.500z" fill="#5e9fe0"/><path d="M1450.7 2067.500l14-14.500" stroke="#fff" stroke-width="1.600"/>
<path d="M1490.1 2063l16-16.500h10q7 0 7 7v21.500h-26q-7 0-7-7z" fill="#dedede" stroke="#4f4f4f" stroke-width="2.400" stroke-linejoin="round"/><path d="M1491.1 2061l14-14.500l8 6l-14 14.500z" fill="#5e9fe0"/><path d="M1498.6 2067.500l14-14.500" stroke="#fff" stroke-width="1.600"/>
<path d="M1519.500 2034h25v8.500l-12.500 9l-12.500-9z" fill="#5a5a5a"/><path d="M1532 2048v49" stroke="#5a5a5a" stroke-width="3"/>
<path d="M3810.8 2059.6L3810.8 2064.4L3806.7 2064.3L3805.5 2067.2L3808.5 2070.1L3805.1 2073.5L3802.2 2070.5L3799.3 2071.7L3799.4 2075.8L3794.6 2075.8L3794.7 2071.7L3791.8 2070.5L3788.9 2073.5L3785.5 2070.1L3788.5 2067.2L3787.3 2064.3L3783.2 2064.4L3783.2 2059.6L3787.3 2059.7L3788.5 2056.8L3785.5 2053.9L3788.9 2050.5L3791.8 2053.5L3794.7 2052.3L3794.6 2048.2L3799.4 2048.2L3799.3 2052.3L3802.2 2053.5L3805.1 2050.5L3808.5 2053.9L3805.5 2056.8L3806.7 2059.7ZM3792.2 2062.0a4.8 4.8 0 1 0 9.6 0a4.8 4.8 0 1 0 -9.6 0z" fill="#6a6a6a" fill-rule="evenodd"/>
<defs><filter id="vcsh" x="-30%" y="-30%" width="160%" height="160%"><feGaussianBlur stdDeviation="7"/></filter></defs>
<path d="M3662 412l62 34l60-50l-20-14z" fill="#000" fill-opacity="0.18" filter="url(#vcsh)"/>
<path d="M3643.5 326.7 L3723.7 361.6 L3780.8 315.6 L3702.2 288.6 Z" fill="#f0f0f0"/>
<path d="M3649.0 403.7 L3723.7 439.4 L3723.7 361.6 L3643.5 326.7 Z" fill="#ebebeb"/>
<path d="M3723.7 439.4 L3774.4 391.7 L3780.8 315.6 L3723.7 361.6 Z" fill="#e5e5e5"/>
<g fill="none" stroke="#939393" stroke-width="1.400" stroke-dasharray="9 6">
<path d="M3643.5 326.7L3702.2 288.6L3780.8 315.6L3723.7 361.6"/>
<path d="M3643.5 326.7L3723.7 361.6L3723.7 439.4"/>
<path d="M3780.8 315.6L3774.4 391.7L3723.7 439.4"/>
</g>
<text transform="matrix(0.91 0.405 -0.07 1 3653 378)" font-size="22" fill="#6f6f6f" textLength="64" lengthAdjust="spacingAndGlyphs">FRONTE</text>
<text transform="matrix(0.74 -0.68 0 1 3733 399)" font-size="19" fill="#777" textLength="50" lengthAdjust="spacingAndGlyphs">DESTRA</text>
<text transform="matrix(-0.93 -0.33 0.75 -0.55 3741 323)" font-size="19" fill="#777" textLength="46" lengthAdjust="spacingAndGlyphs">ALTO</text>
<path d="M3639.500 312.400L3649 403.700" stroke="#5454c8" stroke-width="3.600" stroke-linecap="round"/>
<path d="M3649 403.700L3736 452" stroke="#d97a7a" stroke-width="3.600" stroke-linecap="round"/>
<text x="3627" y="306" font-size="29" fill="#6a6ad4">Z</text>
<text x="3739" y="469" font-size="30" fill="#e97a7a">X</text>
<path d="M157 1782.600v27.800l6.500-6l5.600 12.400l5.200-2.300l-5.600-12.200l9.300-0.600z" fill="#000" stroke="#fff" stroke-width="2.200" stroke-linejoin="round"/>
</g>
</svg>
</body></html>
